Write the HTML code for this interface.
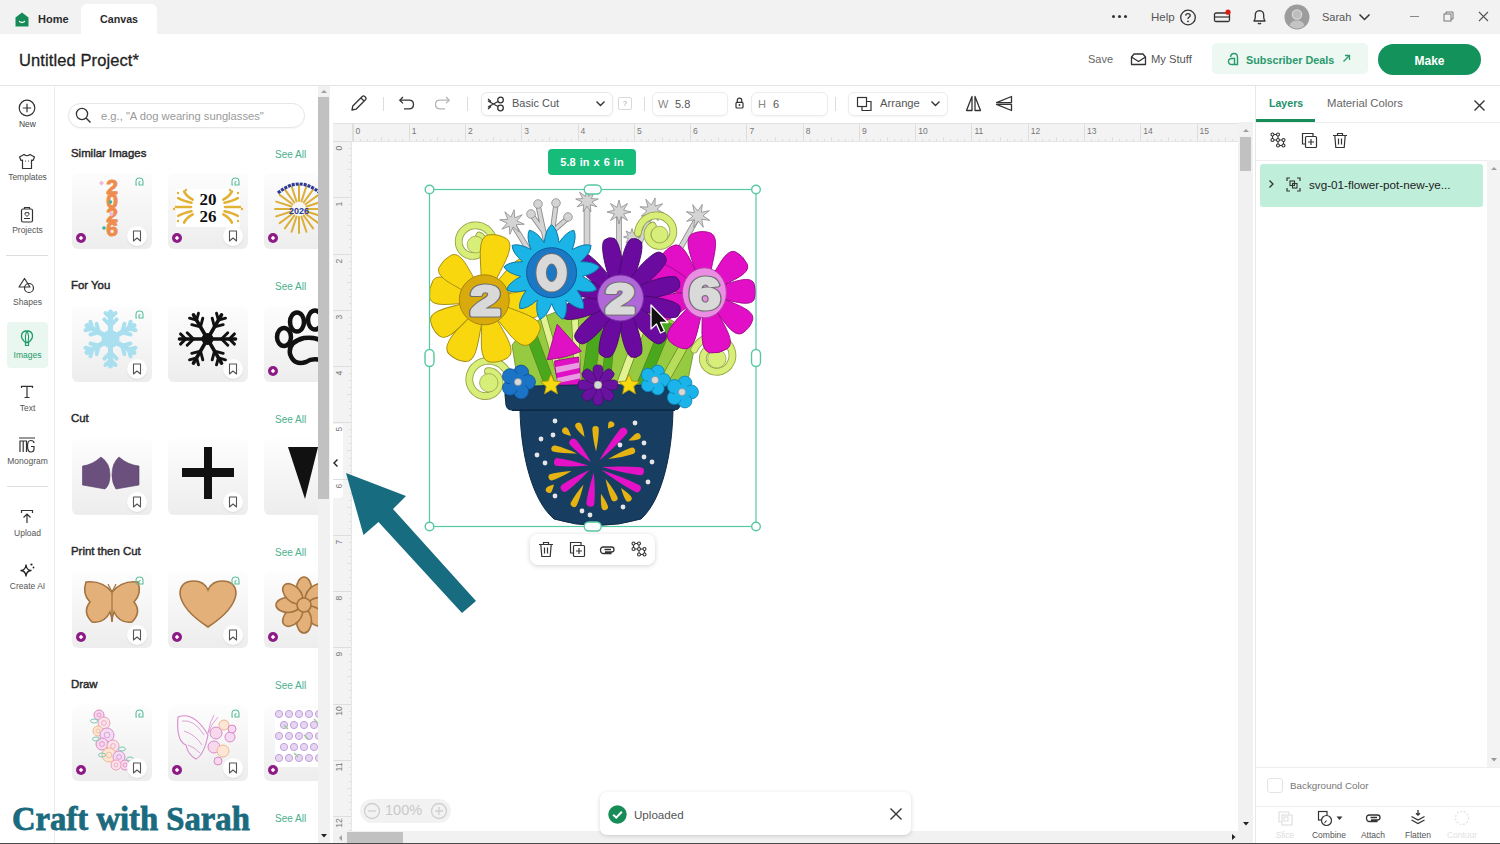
<!DOCTYPE html>
<html><head><meta charset="utf-8">
<style>
*{box-sizing:border-box;margin:0;padding:0}
html,body{width:1500px;height:844px;overflow:hidden;background:#fff;font-family:"Liberation Sans",sans-serif;color:#222;position:relative}
.a{position:absolute}
.t{position:absolute;white-space:nowrap;line-height:1}
#topbar{left:0;top:0;width:1500px;height:34px;background:#f2f2f2}
#header{left:0;top:34px;width:1500px;height:52px;background:#fff;border-bottom:1px solid #e4e4e4}
#nav{left:0;top:86px;width:55px;height:757px;background:#fff;border-right:1px solid #ececec}
#panel{left:55px;top:86px;width:263px;height:757px;background:#fff;overflow:hidden}
#pscroll{left:318px;top:86px;width:12px;height:757px;background:#f1f1f1}
#canvas{left:330px;top:86px;width:925px;height:757px;background:#fff}
#rpanel{left:1255px;top:86px;width:245px;height:757px;background:#fff;border-left:1px solid #e8e8e8}
#bottomline{left:0;top:843px;width:1500px;height:1px;background:#4a4a4a}
.navlbl{position:absolute;width:55px;text-align:center;font-size:9px;color:#555;left:0}
.sec{position:absolute;left:71px;font-size:11.4px;font-weight:normal;-webkit-text-stroke:0.45px #2a2a2a;color:#2a2a2a}
.see{position:absolute;left:275px;font-size:10px;color:#4bb18c}
.card{position:absolute;width:81px;height:76px;border-radius:6px;background:linear-gradient(#fdfdfd,#ededed);overflow:hidden}
.bm{position:absolute;width:20px;height:20px;border-radius:50%;background:#fff;box-shadow:0 1px 2px rgba(0,0,0,.08)}
.pb{position:absolute;width:10px;height:10px;border-radius:50%;background:#8e1a8a}
</style></head>
<body>
<div id="topbar" class="a"></div>
<div id="header" class="a"></div>
<div id="nav" class="a"></div>
<div id="panel" class="a"></div>
<div id="pscroll" class="a"></div>
<div id="canvas" class="a"></div>
<div id="rpanel" class="a"></div>

<!-- TOP BAR -->
<div class="a" style="left:81px;top:4px;width:76px;height:31px;background:#fff;border-radius:6px 6px 0 0"></div>
<svg class="a" style="left:15px;top:12px" width="14" height="15" viewBox="0 0 14 15"><path d="M7 0.5 L13.5 5.5 V14.5 H0.5 V5.5 Z" fill="#178b57"/><path d="M4.5 9.5 Q7 11.5 9.5 9.5" stroke="#fff" stroke-width="1.3" fill="none" stroke-linecap="round"/></svg>
<div class="t" style="left:38px;top:14px;font-size:11px;font-weight:bold;color:#2b2b2b">Home</div>
<div class="t" style="left:100px;top:14px;font-size:10.7px;font-weight:bold;color:#2b2b2b">Canvas</div>
<div class="a" style="left:1112px;top:15px;width:3px;height:3px;border-radius:50%;background:#333;box-shadow:6px 0 0 #333,12px 0 0 #333"></div>
<div class="t" style="left:1151px;top:12px;font-size:11.5px;color:#555">Help</div>
<svg class="a" style="left:1179px;top:9px" width="18" height="17" viewBox="0 0 18 17"><circle cx="9" cy="8.5" r="7.3" fill="none" stroke="#333" stroke-width="1.3"/><path d="M6.7 6.6 Q6.8 4.6 9 4.6 Q11.2 4.6 11.2 6.5 Q11.2 7.8 9.6 8.5 Q9 8.9 9 10" stroke="#333" stroke-width="1.3" fill="none"/><circle cx="9" cy="12.3" r="0.9" fill="#333"/></svg>
<svg class="a" style="left:1213px;top:9px" width="20" height="15" viewBox="0 0 20 15"><rect x="1.5" y="4" width="15" height="8.5" rx="1.5" fill="none" stroke="#333" stroke-width="1.3"/><path d="M1.5 8 H16.5" stroke="#333" stroke-width="1.2"/><circle cx="15" cy="3.2" r="2.6" fill="#d91e18"/></svg>
<svg class="a" style="left:1251px;top:8px" width="17" height="18" viewBox="0 0 17 18"><path d="M3 13 Q4.3 11.5 4.3 9 V7 Q4.3 3 8.5 2.6 Q12.7 3 12.7 7 V9 Q12.7 11.5 14 13 Z" fill="none" stroke="#333" stroke-width="1.3" stroke-linejoin="round"/><path d="M7 15 Q8.5 16.6 10 15" stroke="#333" stroke-width="1.3" fill="none"/></svg>
<svg class="a" style="left:1284px;top:4px" width="26" height="26" viewBox="0 0 26 26"><circle cx="13" cy="13" r="12.5" fill="#9c9c9c"/><circle cx="13" cy="10.5" r="4.6" fill="#bdbdbd" stroke="#d8d8d8" stroke-width="1.3"/><path d="M5.5 21.5 Q7 16.5 13 16.5 Q19 16.5 20.5 21.5 Q17 24.5 13 24.5 Q9 24.5 5.5 21.5Z" fill="#c4c4c4"/></svg>
<div class="t" style="left:1322px;top:12px;font-size:11px;color:#555">Sarah</div>
<svg class="a" style="left:1358px;top:13px" width="13" height="8" viewBox="0 0 13 8"><path d="M1.5 1.5 L6.5 6.5 L11.5 1.5" stroke="#333" stroke-width="1.5" fill="none"/></svg>
<div class="a" style="left:1410px;top:16px;width:9px;height:1px;background:#888"></div>
<svg class="a" style="left:1443px;top:11px" width="11" height="11" viewBox="0 0 11 11"><rect x="1" y="3" width="7" height="7" fill="none" stroke="#777" stroke-width="1"/><path d="M3 3 V1 H10 V8 H8" fill="none" stroke="#777" stroke-width="1"/></svg>
<svg class="a" style="left:1478px;top:11px" width="11" height="11" viewBox="0 0 11 11"><path d="M1 1 L10 10 M10 1 L1 10" stroke="#555" stroke-width="1.1"/></svg>
<!-- HEADER -->
<div class="t" style="left:19px;top:52px;font-size:16.5px;color:#1f1f1f;letter-spacing:0.1px;-webkit-text-stroke:0.3px #1f1f1f">Untitled Project*</div>
<div class="t" style="left:1088px;top:54px;font-size:11px;color:#666">Save</div>
<svg class="a" style="left:1130px;top:52px" width="17" height="14" viewBox="0 0 17 14"><path d="M1.5 5 V12.5 H15.5 V5 L13 2 H4 Z" fill="none" stroke="#333" stroke-width="1.3" stroke-linejoin="round"/><path d="M1.5 5 L8.5 9.5 L15.5 5" fill="none" stroke="#333" stroke-width="1.3"/></svg>
<div class="t" style="left:1151px;top:54px;font-size:11.2px;color:#555">My Stuff</div>
<div class="a" style="left:1212px;top:43px;width:156px;height:31px;border-radius:5px;background:#edf8f2"></div>
<svg class="a" style="left:1227px;top:52px" width="13" height="14" viewBox="0 0 13 14"><path d="M3.5 5 Q4 1.5 7 1.5 Q10.5 1.5 10.5 5.5 V12.5 H5 Q1.5 12.5 1.5 9.5 Q1.5 6.5 5 6.5 H7.5 V12" fill="none" stroke="#2a9a6c" stroke-width="1.4"/></svg>
<div class="t" style="left:1246px;top:55px;font-size:10.8px;font-weight:bold;color:#2a9a6c">Subscriber Deals</div>
<svg class="a" style="left:1342px;top:54px" width="9" height="9" viewBox="0 0 9 9"><path d="M1.5 7.5 L7.5 1.5 M3 1.5 H7.5 V6" stroke="#2a9a6c" stroke-width="1.3" fill="none"/></svg>
<div class="a" style="left:1378px;top:44px;width:103px;height:31px;border-radius:16px;background:#13925b"></div>
<div class="t" style="left:1378px;top:55px;width:103px;text-align:center;font-size:12px;font-weight:bold;color:#fff">Make</div>

<!-- LEFT NAV -->
<svg class="a" style="left:18px;top:99px" width="18" height="18" viewBox="0 0 18 18"><circle cx="9" cy="9" r="7.8" fill="none" stroke="#333" stroke-width="1.2"/><path d="M9 4.8 V13.2 M4.8 9 H13.2" stroke="#333" stroke-width="1.2"/></svg>
<div class="navlbl t" style="top:120px;font-size:8.5px;color:#444">New</div>
<svg class="a" style="left:18px;top:153px" width="18" height="17" viewBox="0 0 18 17"><path d="M6 1.5 L1.5 4 L3 7.5 L4.5 7 V15.5 H13.5 V7 L15 7.5 L16.5 4 L12 1.5 Q9 4 6 1.5 Z" fill="none" stroke="#333" stroke-width="1.2" stroke-linejoin="round"/><circle cx="7.5" cy="8" r="0.6" fill="#333"/><circle cx="10.5" cy="8" r="0.6" fill="#333"/></svg>
<div class="navlbl t" style="top:173px;font-size:8.5px;color:#555">Templates</div>
<svg class="a" style="left:20px;top:206px" width="14" height="17" viewBox="0 0 14 17"><rect x="1.5" y="3" width="11" height="13" rx="1.5" fill="none" stroke="#333" stroke-width="1.2"/><path d="M4.5 3 V1.5 H9.5 V3" fill="none" stroke="#333" stroke-width="1.2"/><path d="M4 12.5 H10 M7 10.5 Q4.3 8.5 5 7 Q6 5.8 7 7 Q8 5.8 9 7 Q9.7 8.5 7 10.5Z" fill="none" stroke="#333" stroke-width="1"/></svg>
<div class="navlbl t" style="top:226px;font-size:8.5px;color:#555">Projects</div>
<div class="a" style="left:6px;top:255px;width:42px;height:1px;background:#ddd"></div>
<svg class="a" style="left:18px;top:277px" width="18" height="17" viewBox="0 0 18 17"><path d="M6.5 1.5 L1 10 H12 Z" fill="none" stroke="#333" stroke-width="1.2" stroke-linejoin="round"/><circle cx="11" cy="11" r="4.5" fill="none" stroke="#333" stroke-width="1.2"/></svg>
<div class="navlbl t" style="top:298px;font-size:8.5px;color:#555">Shapes</div>
<div class="a" style="left:7px;top:322px;width:41px;height:46px;border-radius:4px;background:#eaf7f0"></div>
<svg class="a" style="left:20px;top:330px" width="14" height="17" viewBox="0 0 14 17"><path d="M7 1 Q12.5 1 12.5 6 Q12.5 9 8.5 12.5 H5.5 Q1.5 9 1.5 6 Q1.5 1 7 1 Z" fill="none" stroke="#1f9a6a" stroke-width="1.3"/><path d="M7 1 Q4.5 5 6 12.5 M7 1 Q9.5 5 8 12.5" fill="none" stroke="#1f9a6a" stroke-width="1.1"/><path d="M5.5 13 V15.5 H8.5 V13" fill="none" stroke="#1f9a6a" stroke-width="1.2"/></svg>
<div class="navlbl t" style="top:351px;font-size:8.5px;color:#1f9a6a">Images</div>
<svg class="a" style="left:20px;top:385px" width="14" height="14" viewBox="0 0 14 14"><path d="M1.5 3 V1.3 H12.5 V3 M7 1.3 V12.5 M4.5 12.5 H9.5" fill="none" stroke="#333" stroke-width="1.2"/></svg>
<div class="navlbl t" style="top:404px;font-size:8.5px;color:#555">Text</div>
<svg class="a" style="left:18px;top:437px" width="18" height="16" viewBox="0 0 18 16"><path d="M1 1 H17" stroke="#333" stroke-width="1"/><path d="M2 15 V4 H8.5 V15 M5.2 4 V15" fill="none" stroke="#333" stroke-width="1.2"/><path d="M16 6 Q16 3.5 12.7 3.5 Q9.5 3.5 9.5 9 Q9.5 15 12.7 15 Q16 15 16 12 V9.5 H13" fill="none" stroke="#333" stroke-width="1.2"/></svg>
<div class="navlbl t" style="top:457px;font-size:8.5px;color:#555">Monogram</div>
<div class="a" style="left:7px;top:486px;width:41px;height:1px;background:#ddd"></div>
<svg class="a" style="left:20px;top:509px" width="14" height="15" viewBox="0 0 14 15"><path d="M1.5 4 V1.5 H12.5 V4" fill="none" stroke="#333" stroke-width="1.2"/><path d="M7 14 V5 M3.5 8.5 L7 5 L10.5 8.5" fill="none" stroke="#333" stroke-width="1.2"/></svg>
<div class="navlbl t" style="top:529px;font-size:8.5px;color:#555">Upload</div>
<svg class="a" style="left:19px;top:562px" width="17" height="16" viewBox="0 0 17 16"><path d="M7 3 Q7.5 8 12 8.5 Q7.5 9 7 14 Q6.5 9 2 8.5 Q6.5 8 7 3 Z" fill="none" stroke="#222" stroke-width="1.3" stroke-linejoin="round"/><circle cx="12.5" cy="2.5" r="1.1" fill="#222"/><circle cx="14.5" cy="5.5" r="0.9" fill="#222"/></svg>
<div class="navlbl t" style="top:582px;font-size:8.5px;color:#555">Create AI</div>

<!-- LEFT PANEL -->
<div class="a" style="left:68px;top:103px;width:237px;height:25px;border-radius:13px;border:1px solid #e6e6e6;background:#fff;box-shadow:0 1px 2px rgba(0,0,0,.04)"></div>
<svg class="a" style="left:75px;top:107px" width="17" height="17" viewBox="0 0 17 17"><circle cx="7" cy="7" r="5.6" fill="none" stroke="#333" stroke-width="1.3"/><path d="M11 11 L15.5 15.5" stroke="#333" stroke-width="1.4"/></svg>
<div class="t" style="left:101px;top:111px;font-size:11.2px;color:#9a9a9a">e.g., "A dog wearing sunglasses"</div>

<div class="t sec" style="top:148px">Similar Images</div>
<div class="t see" style="top:150px">See All</div>
<div class="t sec" style="top:280px">For You</div>
<div class="t see" style="top:282px">See All</div>
<div class="t sec" style="top:413px">Cut</div>
<div class="t see" style="top:415px">See All</div>
<div class="t sec" style="top:546px">Print then Cut</div>
<div class="t see" style="top:548px">See All</div>
<div class="t sec" style="top:679px">Draw</div>
<div class="t see" style="top:681px">See All</div>
<div class="t see" style="top:814px">See All</div>
<div class="card" style="left:72px;top:173px;width:80px;border-radius:6px"></div>
<!--THUMB00--><svg class="a" style="left:72px;top:173px" width="80" height="76" viewBox="0 0 80 76"><text x="40" y="21" text-anchor="middle" font-family="Liberation Sans" font-weight="bold" font-size="21" fill="#ee8c4e" stroke="#ee8c4e" stroke-width="1">2</text><text x="40" y="35" text-anchor="middle" font-family="Liberation Sans" font-weight="bold" font-size="21" fill="#ee8c4e" stroke="#ee8c4e" stroke-width="1">0</text><text x="40" y="49" text-anchor="middle" font-family="Liberation Sans" font-weight="bold" font-size="21" fill="#ee8c4e" stroke="#ee8c4e" stroke-width="1">2</text><text x="40" y="63" text-anchor="middle" font-family="Liberation Sans" font-weight="bold" font-size="21" fill="#ee8c4e" stroke="#ee8c4e" stroke-width="1">6</text><path d="M27 10 l2.5 -2.5 l2.5 2.5 l-2.5 2.5z M37 41 l2.5 -2.5 l2.5 2.5 l-2.5 2.5z" fill="#f0b8d8"/><circle cx="38.5" cy="29" r="1.8" fill="#3bb3a4"/><circle cx="32" cy="55" r="1.8" fill="#3bb3a4"/></svg>
<div class="bm" style="left:127px;top:226px"></div><svg class="a" style="left:132px;top:230px" width="10" height="12" viewBox="0 0 10 12"><path d="M1.5 1 H8.5 V11 L5 8 L1.5 11 Z" fill="none" stroke="#555" stroke-width="1.1" stroke-linejoin="round"/></svg>
<svg class="a" style="left:76px;top:233px" width="10" height="10" viewBox="0 0 10 10"><circle cx="5" cy="5" r="5" fill="#8d1b86"/><rect x="3.4" y="3.4" width="3.2" height="3.2" transform="rotate(45 5 5)" fill="#fff"/></svg>
<svg class="a" style="left:135px;top:177px" width="9" height="9" viewBox="0 0 9 9"><path d="M2 8 H1 V4.5 Q1 1 4.5 1 Q8 1 8 4.5 V8 H4 V5.5 Q4 4.5 5.5 4.5" fill="none" stroke="#5cc09a" stroke-width="1.1"/></svg>
<div class="card" style="left:168px;top:173px;width:80px;border-radius:6px"></div>
<!--THUMB01--><svg class="a" style="left:168px;top:173px" width="80" height="76" viewBox="0 0 80 76"><rect x="8" y="16" width="64" height="38" fill="#fff"/><path d="M24.7,26.6 Q18.4,23.3 16.1,18.4" fill="none" stroke="#e2b236" stroke-width="2.6" stroke-linecap="round"/><path d="M23.5,29.8 Q14.8,27.8 10.2,25.1" fill="none" stroke="#e2b236" stroke-width="2.6" stroke-linecap="round"/><path d="M23.0,34.0 Q13.5,34.0 8.0,34.0" fill="none" stroke="#e2b236" stroke-width="2.6" stroke-linecap="round"/><path d="M23.5,38.2 Q14.8,40.2 10.2,42.9" fill="none" stroke="#e2b236" stroke-width="2.6" stroke-linecap="round"/><path d="M24.7,41.4 Q18.4,44.7 16.1,49.6" fill="none" stroke="#e2b236" stroke-width="2.6" stroke-linecap="round"/><circle cx="10" cy="20" r="1.2" fill="#e2b236"/><circle cx="6" cy="36" r="1.2" fill="#e2b236"/><circle cx="10" cy="48" r="1.2" fill="#e2b236"/><circle cx="18" cy="17" r="1.2" fill="#e2b236"/><path d="M55.3,26.6 Q61.6,23.3 63.9,18.4" fill="none" stroke="#e2b236" stroke-width="2.6" stroke-linecap="round"/><path d="M56.5,29.8 Q65.2,27.8 69.8,25.1" fill="none" stroke="#e2b236" stroke-width="2.6" stroke-linecap="round"/><path d="M57.0,34.0 Q66.5,34.0 72.0,34.0" fill="none" stroke="#e2b236" stroke-width="2.6" stroke-linecap="round"/><path d="M56.5,38.2 Q65.2,40.2 69.8,42.9" fill="none" stroke="#e2b236" stroke-width="2.6" stroke-linecap="round"/><path d="M55.3,41.4 Q61.6,44.7 63.9,49.6" fill="none" stroke="#e2b236" stroke-width="2.6" stroke-linecap="round"/><circle cx="70" cy="20" r="1.2" fill="#e2b236"/><circle cx="74" cy="36" r="1.2" fill="#e2b236"/><circle cx="70" cy="48" r="1.2" fill="#e2b236"/><circle cx="62" cy="17" r="1.2" fill="#e2b236"/><text x="40" y="32" text-anchor="middle" font-family="Liberation Serif" font-weight="bold" font-size="17" fill="#111">20</text><text x="40" y="48.5" text-anchor="middle" font-family="Liberation Serif" font-weight="bold" font-size="17" fill="#111">26</text></svg>
<div class="bm" style="left:223px;top:226px"></div><svg class="a" style="left:228px;top:230px" width="10" height="12" viewBox="0 0 10 12"><path d="M1.5 1 H8.5 V11 L5 8 L1.5 11 Z" fill="none" stroke="#555" stroke-width="1.1" stroke-linejoin="round"/></svg>
<svg class="a" style="left:172px;top:233px" width="10" height="10" viewBox="0 0 10 10"><circle cx="5" cy="5" r="5" fill="#8d1b86"/><rect x="3.4" y="3.4" width="3.2" height="3.2" transform="rotate(45 5 5)" fill="#fff"/></svg>
<svg class="a" style="left:231px;top:177px" width="9" height="9" viewBox="0 0 9 9"><path d="M2 8 H1 V4.5 Q1 1 4.5 1 Q8 1 8 4.5 V8 H4 V5.5 Q4 4.5 5.5 4.5" fill="none" stroke="#5cc09a" stroke-width="1.1"/></svg>
<div class="card" style="left:264px;top:173px;width:54px;border-radius:6px 0 0 6px"></div>
<!--THUMB02--><svg class="a" style="left:264px;top:173px" width="54" height="76" viewBox="0 0 54 76"><line x1="43.0" y1="36.0" x2="59.0" y2="36.0" stroke="#dcae3a" stroke-width="2" stroke-linecap="round"/><line x1="42.6" y1="38.5" x2="57.8" y2="43.4" stroke="#dcae3a" stroke-width="2" stroke-linecap="round"/><line x1="41.5" y1="40.7" x2="54.4" y2="50.1" stroke="#dcae3a" stroke-width="2" stroke-linecap="round"/><line x1="39.7" y1="42.5" x2="49.1" y2="55.4" stroke="#dcae3a" stroke-width="2" stroke-linecap="round"/><line x1="37.5" y1="43.6" x2="42.4" y2="58.8" stroke="#dcae3a" stroke-width="2" stroke-linecap="round"/><line x1="35.0" y1="44.0" x2="35.0" y2="60.0" stroke="#dcae3a" stroke-width="2" stroke-linecap="round"/><line x1="32.5" y1="43.6" x2="27.6" y2="58.8" stroke="#dcae3a" stroke-width="2" stroke-linecap="round"/><line x1="30.3" y1="42.5" x2="20.9" y2="55.4" stroke="#dcae3a" stroke-width="2" stroke-linecap="round"/><line x1="28.5" y1="40.7" x2="15.6" y2="50.1" stroke="#dcae3a" stroke-width="2" stroke-linecap="round"/><line x1="27.4" y1="38.5" x2="12.2" y2="43.4" stroke="#dcae3a" stroke-width="2" stroke-linecap="round"/><line x1="27.0" y1="36.0" x2="11.0" y2="36.0" stroke="#dcae3a" stroke-width="2" stroke-linecap="round"/><line x1="27.4" y1="33.5" x2="12.2" y2="28.6" stroke="#dcae3a" stroke-width="2" stroke-linecap="round"/><line x1="28.5" y1="31.3" x2="15.6" y2="21.9" stroke="#dcae3a" stroke-width="2" stroke-linecap="round"/><line x1="30.3" y1="29.5" x2="20.9" y2="16.6" stroke="#dcae3a" stroke-width="2" stroke-linecap="round"/><line x1="32.5" y1="28.4" x2="27.6" y2="13.2" stroke="#dcae3a" stroke-width="2" stroke-linecap="round"/><line x1="35.0" y1="28.0" x2="35.0" y2="12.0" stroke="#dcae3a" stroke-width="2" stroke-linecap="round"/><line x1="37.5" y1="28.4" x2="42.4" y2="13.2" stroke="#dcae3a" stroke-width="2" stroke-linecap="round"/><line x1="39.7" y1="29.5" x2="49.1" y2="16.6" stroke="#dcae3a" stroke-width="2" stroke-linecap="round"/><line x1="41.5" y1="31.3" x2="54.4" y2="21.9" stroke="#dcae3a" stroke-width="2" stroke-linecap="round"/><line x1="42.6" y1="33.5" x2="57.8" y2="28.6" stroke="#dcae3a" stroke-width="2" stroke-linecap="round"/><path d="M14 20 Q35 2 56 20" fill="none" stroke="#2a3a96" stroke-width="3.2" stroke-dasharray="3 1"/><text x="35" y="41" text-anchor="middle" font-family="Liberation Sans" font-weight="bold" font-size="9" fill="#2a3a96">2026</text></svg>
<svg class="a" style="left:268px;top:233px" width="10" height="10" viewBox="0 0 10 10"><circle cx="5" cy="5" r="5" fill="#8d1b86"/><rect x="3.4" y="3.4" width="3.2" height="3.2" transform="rotate(45 5 5)" fill="#fff"/></svg>
<div class="card" style="left:72px;top:306px;width:80px;border-radius:6px"></div>
<!--THUMB10--><svg class="a" style="left:72px;top:306px" width="80" height="76" viewBox="0 0 80 76"><line x1="38.5" y1="33" x2="38.5" y2="6.0" stroke="#a9dfee" stroke-width="5" stroke-linecap="round"/><line x1="38.5" y1="19.5" x2="32.4" y2="13.4" stroke="#a9dfee" stroke-width="4.0" stroke-linecap="round"/><line x1="38.5" y1="19.5" x2="44.6" y2="13.4" stroke="#a9dfee" stroke-width="4.0" stroke-linecap="round"/><line x1="38.5" y1="11.9" x2="33.5" y2="7.0" stroke="#a9dfee" stroke-width="4.0" stroke-linecap="round"/><line x1="38.5" y1="11.9" x2="43.5" y2="7.0" stroke="#a9dfee" stroke-width="4.0" stroke-linecap="round"/><line x1="38.5" y1="33" x2="61.9" y2="19.5" stroke="#a9dfee" stroke-width="5" stroke-linecap="round"/><line x1="50.2" y1="26.2" x2="52.4" y2="17.9" stroke="#a9dfee" stroke-width="4.0" stroke-linecap="round"/><line x1="50.2" y1="26.2" x2="58.5" y2="28.5" stroke="#a9dfee" stroke-width="4.0" stroke-linecap="round"/><line x1="56.7" y1="22.5" x2="58.6" y2="15.7" stroke="#a9dfee" stroke-width="4.0" stroke-linecap="round"/><line x1="56.7" y1="22.5" x2="63.5" y2="24.3" stroke="#a9dfee" stroke-width="4.0" stroke-linecap="round"/><line x1="38.5" y1="33" x2="61.9" y2="46.5" stroke="#a9dfee" stroke-width="5" stroke-linecap="round"/><line x1="50.2" y1="39.8" x2="58.5" y2="37.5" stroke="#a9dfee" stroke-width="4.0" stroke-linecap="round"/><line x1="50.2" y1="39.8" x2="52.4" y2="48.1" stroke="#a9dfee" stroke-width="4.0" stroke-linecap="round"/><line x1="56.7" y1="43.5" x2="63.5" y2="41.7" stroke="#a9dfee" stroke-width="4.0" stroke-linecap="round"/><line x1="56.7" y1="43.5" x2="58.6" y2="50.3" stroke="#a9dfee" stroke-width="4.0" stroke-linecap="round"/><line x1="38.5" y1="33" x2="38.5" y2="60.0" stroke="#a9dfee" stroke-width="5" stroke-linecap="round"/><line x1="38.5" y1="46.5" x2="44.6" y2="52.6" stroke="#a9dfee" stroke-width="4.0" stroke-linecap="round"/><line x1="38.5" y1="46.5" x2="32.4" y2="52.6" stroke="#a9dfee" stroke-width="4.0" stroke-linecap="round"/><line x1="38.5" y1="54.1" x2="43.5" y2="59.0" stroke="#a9dfee" stroke-width="4.0" stroke-linecap="round"/><line x1="38.5" y1="54.1" x2="33.5" y2="59.0" stroke="#a9dfee" stroke-width="4.0" stroke-linecap="round"/><line x1="38.5" y1="33" x2="15.1" y2="46.5" stroke="#a9dfee" stroke-width="5" stroke-linecap="round"/><line x1="26.8" y1="39.8" x2="24.6" y2="48.1" stroke="#a9dfee" stroke-width="4.0" stroke-linecap="round"/><line x1="26.8" y1="39.8" x2="18.5" y2="37.5" stroke="#a9dfee" stroke-width="4.0" stroke-linecap="round"/><line x1="20.3" y1="43.5" x2="18.4" y2="50.3" stroke="#a9dfee" stroke-width="4.0" stroke-linecap="round"/><line x1="20.3" y1="43.5" x2="13.5" y2="41.7" stroke="#a9dfee" stroke-width="4.0" stroke-linecap="round"/><line x1="38.5" y1="33" x2="15.1" y2="19.5" stroke="#a9dfee" stroke-width="5" stroke-linecap="round"/><line x1="26.8" y1="26.2" x2="18.5" y2="28.5" stroke="#a9dfee" stroke-width="4.0" stroke-linecap="round"/><line x1="26.8" y1="26.2" x2="24.6" y2="17.9" stroke="#a9dfee" stroke-width="4.0" stroke-linecap="round"/><line x1="20.3" y1="22.5" x2="13.5" y2="24.3" stroke="#a9dfee" stroke-width="4.0" stroke-linecap="round"/><line x1="20.3" y1="22.5" x2="18.4" y2="15.7" stroke="#a9dfee" stroke-width="4.0" stroke-linecap="round"/><circle cx="38.5" cy="33" r="9" fill="#a9dfee"/></svg>
<div class="bm" style="left:127px;top:359px"></div><svg class="a" style="left:132px;top:363px" width="10" height="12" viewBox="0 0 10 12"><path d="M1.5 1 H8.5 V11 L5 8 L1.5 11 Z" fill="none" stroke="#555" stroke-width="1.1" stroke-linejoin="round"/></svg>
<svg class="a" style="left:135px;top:310px" width="9" height="9" viewBox="0 0 9 9"><path d="M2 8 H1 V4.5 Q1 1 4.5 1 Q8 1 8 4.5 V8 H4 V5.5 Q4 4.5 5.5 4.5" fill="none" stroke="#5cc09a" stroke-width="1.1"/></svg>
<div class="card" style="left:168px;top:306px;width:80px;border-radius:6px"></div>
<!--THUMB11--><svg class="a" style="left:168px;top:306px" width="80" height="76" viewBox="0 0 80 76"><line x1="39.5" y1="33" x2="67.5" y2="33.0" stroke="#111" stroke-width="3.6" stroke-linecap="round"/><line x1="53.5" y1="33.0" x2="59.8" y2="26.7" stroke="#111" stroke-width="2.8800000000000003" stroke-linecap="round"/><line x1="53.5" y1="33.0" x2="59.8" y2="39.3" stroke="#111" stroke-width="2.8800000000000003" stroke-linecap="round"/><line x1="61.3" y1="33.0" x2="66.5" y2="27.9" stroke="#111" stroke-width="2.8800000000000003" stroke-linecap="round"/><line x1="61.3" y1="33.0" x2="66.5" y2="38.1" stroke="#111" stroke-width="2.8800000000000003" stroke-linecap="round"/><line x1="39.5" y1="33" x2="53.5" y2="57.2" stroke="#111" stroke-width="3.6" stroke-linecap="round"/><line x1="46.5" y1="45.1" x2="55.2" y2="47.4" stroke="#111" stroke-width="2.8800000000000003" stroke-linecap="round"/><line x1="46.5" y1="45.1" x2="44.2" y2="53.8" stroke="#111" stroke-width="2.8800000000000003" stroke-linecap="round"/><line x1="50.4" y1="51.9" x2="57.5" y2="53.8" stroke="#111" stroke-width="2.8800000000000003" stroke-linecap="round"/><line x1="50.4" y1="51.9" x2="48.5" y2="58.9" stroke="#111" stroke-width="2.8800000000000003" stroke-linecap="round"/><line x1="39.5" y1="33" x2="25.5" y2="57.2" stroke="#111" stroke-width="3.6" stroke-linecap="round"/><line x1="32.5" y1="45.1" x2="34.8" y2="53.8" stroke="#111" stroke-width="2.8800000000000003" stroke-linecap="round"/><line x1="32.5" y1="45.1" x2="23.8" y2="47.4" stroke="#111" stroke-width="2.8800000000000003" stroke-linecap="round"/><line x1="28.6" y1="51.9" x2="30.5" y2="58.9" stroke="#111" stroke-width="2.8800000000000003" stroke-linecap="round"/><line x1="28.6" y1="51.9" x2="21.5" y2="53.8" stroke="#111" stroke-width="2.8800000000000003" stroke-linecap="round"/><line x1="39.5" y1="33" x2="11.5" y2="33.0" stroke="#111" stroke-width="3.6" stroke-linecap="round"/><line x1="25.5" y1="33.0" x2="19.2" y2="39.3" stroke="#111" stroke-width="2.8800000000000003" stroke-linecap="round"/><line x1="25.5" y1="33.0" x2="19.2" y2="26.7" stroke="#111" stroke-width="2.8800000000000003" stroke-linecap="round"/><line x1="17.7" y1="33.0" x2="12.5" y2="38.1" stroke="#111" stroke-width="2.8800000000000003" stroke-linecap="round"/><line x1="17.7" y1="33.0" x2="12.5" y2="27.9" stroke="#111" stroke-width="2.8800000000000003" stroke-linecap="round"/><line x1="39.5" y1="33" x2="25.5" y2="8.8" stroke="#111" stroke-width="3.6" stroke-linecap="round"/><line x1="32.5" y1="20.9" x2="23.8" y2="18.6" stroke="#111" stroke-width="2.8800000000000003" stroke-linecap="round"/><line x1="32.5" y1="20.9" x2="34.8" y2="12.2" stroke="#111" stroke-width="2.8800000000000003" stroke-linecap="round"/><line x1="28.6" y1="14.1" x2="21.5" y2="12.2" stroke="#111" stroke-width="2.8800000000000003" stroke-linecap="round"/><line x1="28.6" y1="14.1" x2="30.5" y2="7.1" stroke="#111" stroke-width="2.8800000000000003" stroke-linecap="round"/><line x1="39.5" y1="33" x2="53.5" y2="8.8" stroke="#111" stroke-width="3.6" stroke-linecap="round"/><line x1="46.5" y1="20.9" x2="44.2" y2="12.2" stroke="#111" stroke-width="2.8800000000000003" stroke-linecap="round"/><line x1="46.5" y1="20.9" x2="55.2" y2="18.6" stroke="#111" stroke-width="2.8800000000000003" stroke-linecap="round"/><line x1="50.4" y1="14.1" x2="48.5" y2="7.1" stroke="#111" stroke-width="2.8800000000000003" stroke-linecap="round"/><line x1="50.4" y1="14.1" x2="57.5" y2="12.2" stroke="#111" stroke-width="2.8800000000000003" stroke-linecap="round"/><circle cx="39.5" cy="33" r="6" fill="#111"/></svg>
<div class="bm" style="left:223px;top:359px"></div><svg class="a" style="left:228px;top:363px" width="10" height="12" viewBox="0 0 10 12"><path d="M1.5 1 H8.5 V11 L5 8 L1.5 11 Z" fill="none" stroke="#555" stroke-width="1.1" stroke-linejoin="round"/></svg>
<div class="card" style="left:264px;top:306px;width:54px;border-radius:6px 0 0 6px"></div>
<!--THUMB12--><svg class="a" style="left:264px;top:306px" width="54" height="76" viewBox="0 0 54 76"><g fill="none" stroke="#111" stroke-width="4.5"><path d="M26 48 Q24 36 40 32 Q56 30 62 40 Q68 52 56 54 Q48 52 42 56 Q30 60 26 48 Z"/><ellipse cx="20" cy="31" rx="7" ry="9"/><ellipse cx="33" cy="16" rx="7" ry="9.5"/><ellipse cx="51" cy="14" rx="7" ry="9.5"/></g></svg>
<svg class="a" style="left:268px;top:366px" width="10" height="10" viewBox="0 0 10 10"><circle cx="5" cy="5" r="5" fill="#8d1b86"/><rect x="3.4" y="3.4" width="3.2" height="3.2" transform="rotate(45 5 5)" fill="#fff"/></svg>
<div class="card" style="left:72px;top:439px;width:80px;border-radius:6px"></div>
<!--THUMB20--><svg class="a" style="left:72px;top:439px" width="80" height="76" viewBox="0 0 80 76"><path d="M10.5 27 Q20 26 29 18 Q38 24 38 36 Q38 46 33 50 L10.5 46 Z" fill="#6b4f7c" stroke="#5a3f6a" stroke-width="0.6"/><path d="M44 50 Q40 44 40 36 Q40 24 47 18 Q56 26 67 27 L67 46 Z" fill="#6b4f7c" stroke="#5a3f6a" stroke-width="0.6"/></svg>
<div class="bm" style="left:127px;top:492px"></div><svg class="a" style="left:132px;top:496px" width="10" height="12" viewBox="0 0 10 12"><path d="M1.5 1 H8.5 V11 L5 8 L1.5 11 Z" fill="none" stroke="#555" stroke-width="1.1" stroke-linejoin="round"/></svg>
<div class="card" style="left:168px;top:439px;width:80px;border-radius:6px"></div>
<!--THUMB21--><svg class="a" style="left:168px;top:439px" width="80" height="76" viewBox="0 0 80 76"><rect x="36" y="8" width="8" height="52" fill="#111"/><rect x="14" y="29" width="52" height="9" fill="#111"/></svg>
<div class="bm" style="left:223px;top:492px"></div><svg class="a" style="left:228px;top:496px" width="10" height="12" viewBox="0 0 10 12"><path d="M1.5 1 H8.5 V11 L5 8 L1.5 11 Z" fill="none" stroke="#555" stroke-width="1.1" stroke-linejoin="round"/></svg>
<div class="card" style="left:264px;top:439px;width:54px;border-radius:6px 0 0 6px"></div>
<!--THUMB22--><svg class="a" style="left:264px;top:439px" width="54" height="76" viewBox="0 0 54 76"><polygon points="24,8 54,8 41,60" fill="#111"/></svg>
<div class="card" style="left:72px;top:572px;width:80px;border-radius:6px"></div>
<!--THUMB30--><svg class="a" style="left:72px;top:572px" width="80" height="76" viewBox="0 0 80 76"><path d="M40 20 Q30 8 14 10 Q10 22 18 30 Q10 40 20 50 Q32 52 38 40 Q40 45 40 50 Q40 45 42 40 Q48 52 60 50 Q70 40 62 30 Q70 22 66 10 Q50 8 40 20 Z" fill="#e3b079" stroke="#a27440" stroke-width="1.6"/><path d="M40 18 V48 M36 12 L40 20 L44 12" stroke="#a27440" stroke-width="1.2" fill="none"/></svg>
<div class="bm" style="left:127px;top:625px"></div><svg class="a" style="left:132px;top:629px" width="10" height="12" viewBox="0 0 10 12"><path d="M1.5 1 H8.5 V11 L5 8 L1.5 11 Z" fill="none" stroke="#555" stroke-width="1.1" stroke-linejoin="round"/></svg>
<svg class="a" style="left:76px;top:632px" width="10" height="10" viewBox="0 0 10 10"><circle cx="5" cy="5" r="5" fill="#8d1b86"/><rect x="3.4" y="3.4" width="3.2" height="3.2" transform="rotate(45 5 5)" fill="#fff"/></svg>
<svg class="a" style="left:135px;top:576px" width="9" height="9" viewBox="0 0 9 9"><path d="M2 8 H1 V4.5 Q1 1 4.5 1 Q8 1 8 4.5 V8 H4 V5.5 Q4 4.5 5.5 4.5" fill="none" stroke="#5cc09a" stroke-width="1.1"/></svg>
<div class="card" style="left:168px;top:572px;width:80px;border-radius:6px"></div>
<!--THUMB31--><svg class="a" style="left:168px;top:572px" width="80" height="76" viewBox="0 0 80 76"><path d="M40 55 Q14 38 12 22 Q12 9 26 9 Q36 9 40 18 Q44 9 54 9 Q68 9 68 22 Q66 38 40 55 Z" fill="#e3b079" stroke="#a27440" stroke-width="1.6"/></svg>
<div class="bm" style="left:223px;top:625px"></div><svg class="a" style="left:228px;top:629px" width="10" height="12" viewBox="0 0 10 12"><path d="M1.5 1 H8.5 V11 L5 8 L1.5 11 Z" fill="none" stroke="#555" stroke-width="1.1" stroke-linejoin="round"/></svg>
<svg class="a" style="left:172px;top:632px" width="10" height="10" viewBox="0 0 10 10"><circle cx="5" cy="5" r="5" fill="#8d1b86"/><rect x="3.4" y="3.4" width="3.2" height="3.2" transform="rotate(45 5 5)" fill="#fff"/></svg>
<svg class="a" style="left:231px;top:576px" width="9" height="9" viewBox="0 0 9 9"><path d="M2 8 H1 V4.5 Q1 1 4.5 1 Q8 1 8 4.5 V8 H4 V5.5 Q4 4.5 5.5 4.5" fill="none" stroke="#5cc09a" stroke-width="1.1"/></svg>
<div class="card" style="left:264px;top:572px;width:54px;border-radius:6px 0 0 6px"></div>
<!--THUMB32--><svg class="a" style="left:264px;top:572px" width="54" height="76" viewBox="0 0 54 76"><ellipse transform="translate(40,33) rotate(0)" cx="0" cy="-16" rx="7.5" ry="12" fill="#e3b079" stroke="#a27440" stroke-width="1.6"/><ellipse transform="translate(40,33) rotate(45)" cx="0" cy="-16" rx="7.5" ry="12" fill="#e3b079" stroke="#a27440" stroke-width="1.6"/><ellipse transform="translate(40,33) rotate(90)" cx="0" cy="-16" rx="7.5" ry="12" fill="#e3b079" stroke="#a27440" stroke-width="1.6"/><ellipse transform="translate(40,33) rotate(135)" cx="0" cy="-16" rx="7.5" ry="12" fill="#e3b079" stroke="#a27440" stroke-width="1.6"/><ellipse transform="translate(40,33) rotate(180)" cx="0" cy="-16" rx="7.5" ry="12" fill="#e3b079" stroke="#a27440" stroke-width="1.6"/><ellipse transform="translate(40,33) rotate(225)" cx="0" cy="-16" rx="7.5" ry="12" fill="#e3b079" stroke="#a27440" stroke-width="1.6"/><ellipse transform="translate(40,33) rotate(270)" cx="0" cy="-16" rx="7.5" ry="12" fill="#e3b079" stroke="#a27440" stroke-width="1.6"/><ellipse transform="translate(40,33) rotate(315)" cx="0" cy="-16" rx="7.5" ry="12" fill="#e3b079" stroke="#a27440" stroke-width="1.6"/><circle cx="40" cy="33" r="7" fill="#e3b079" stroke="#a27440" stroke-width="1.6"/></svg>
<svg class="a" style="left:268px;top:632px" width="10" height="10" viewBox="0 0 10 10"><circle cx="5" cy="5" r="5" fill="#8d1b86"/><rect x="3.4" y="3.4" width="3.2" height="3.2" transform="rotate(45 5 5)" fill="#fff"/></svg>
<div class="card" style="left:72px;top:705px;width:80px;border-radius:6px"></div>
<!--THUMB40--><svg class="a" style="left:72px;top:705px" width="80" height="76" viewBox="0 0 80 76"><circle cx="27" cy="10" r="5" fill="#f7d8ec" stroke="#dd88c8" stroke-width="1"/><circle cx="27" cy="10" r="2.0" fill="none" stroke="#dd88c8" stroke-width="0.8"/><circle cx="32" cy="18" r="6" fill="#fbe3ea" stroke="#e8a0c0" stroke-width="1"/><circle cx="32" cy="18" r="2.4" fill="none" stroke="#e8a0c0" stroke-width="0.8"/><circle cx="26" cy="26" r="5" fill="#fde6d6" stroke="#f0b890" stroke-width="1"/><circle cx="26" cy="26" r="2.0" fill="none" stroke="#f0b890" stroke-width="0.8"/><circle cx="35" cy="30" r="7" fill="#f3dcf2" stroke="#d890d0" stroke-width="1"/><circle cx="35" cy="30" r="2.8" fill="none" stroke="#d890d0" stroke-width="0.8"/><circle cx="30" cy="39" r="6" fill="#f7d8ec" stroke="#dd88c8" stroke-width="1"/><circle cx="30" cy="39" r="2.4" fill="none" stroke="#dd88c8" stroke-width="0.8"/><circle cx="41" cy="41" r="6" fill="#fbe3ea" stroke="#e8a0c0" stroke-width="1"/><circle cx="41" cy="41" r="2.4" fill="none" stroke="#e8a0c0" stroke-width="0.8"/><circle cx="37" cy="50" r="7" fill="#fde6d6" stroke="#f0b890" stroke-width="1"/><circle cx="37" cy="50" r="2.8" fill="none" stroke="#f0b890" stroke-width="0.8"/><circle cx="47" cy="52" r="6" fill="#f3dcf2" stroke="#d890d0" stroke-width="1"/><circle cx="47" cy="52" r="2.4" fill="none" stroke="#d890d0" stroke-width="0.8"/><circle cx="53" cy="60" r="5" fill="#f7d8ec" stroke="#dd88c8" stroke-width="1"/><circle cx="53" cy="60" r="2.0" fill="none" stroke="#dd88c8" stroke-width="0.8"/><circle cx="44" cy="60" r="5" fill="#fbe3ea" stroke="#e8a0c0" stroke-width="1"/><circle cx="44" cy="60" r="2.0" fill="none" stroke="#e8a0c0" stroke-width="0.8"/><ellipse cx="22" cy="16" rx="3.5" ry="2" fill="none" stroke="#7ccab0" stroke-width="1"/><ellipse cx="24" cy="34" rx="3.5" ry="2" fill="none" stroke="#7ccab0" stroke-width="1"/><ellipse cx="30" cy="50" rx="3.5" ry="2" fill="none" stroke="#7ccab0" stroke-width="1"/><ellipse cx="50" cy="44" rx="3.5" ry="2" fill="none" stroke="#7ccab0" stroke-width="1"/><ellipse cx="58" cy="54" rx="3.5" ry="2" fill="none" stroke="#7ccab0" stroke-width="1"/></svg>
<div class="bm" style="left:127px;top:758px"></div><svg class="a" style="left:132px;top:762px" width="10" height="12" viewBox="0 0 10 12"><path d="M1.5 1 H8.5 V11 L5 8 L1.5 11 Z" fill="none" stroke="#555" stroke-width="1.1" stroke-linejoin="round"/></svg>
<svg class="a" style="left:76px;top:765px" width="10" height="10" viewBox="0 0 10 10"><circle cx="5" cy="5" r="5" fill="#8d1b86"/><rect x="3.4" y="3.4" width="3.2" height="3.2" transform="rotate(45 5 5)" fill="#fff"/></svg>
<svg class="a" style="left:135px;top:709px" width="9" height="9" viewBox="0 0 9 9"><path d="M2 8 H1 V4.5 Q1 1 4.5 1 Q8 1 8 4.5 V8 H4 V5.5 Q4 4.5 5.5 4.5" fill="none" stroke="#5cc09a" stroke-width="1.1"/></svg>
<div class="card" style="left:168px;top:705px;width:80px;border-radius:6px"></div>
<!--THUMB41--><svg class="a" style="left:168px;top:705px" width="80" height="76" viewBox="0 0 80 76"><path d="M10 12 Q26 6 40 30 Q36 50 28 54 Q20 50 18 40 Q8 36 10 12 Z" fill="none" stroke="#d88acb" stroke-width="1.1"/><path d="M14 16 Q26 14 36 30 M16 26 Q28 30 34 40 M20 40 Q26 42 32 48" fill="none" stroke="#d88acb" stroke-width="0.8"/><path d="M40 28 Q42 16 46 10 M40 28 Q44 18 50 12" fill="none" stroke="#d88acb" stroke-width="0.8"/><circle cx="48" cy="28" r="6" fill="#f7d8ec" stroke="#d88acb" stroke-width="1"/><circle cx="56" cy="20" r="5" fill="#fde6d6" stroke="#f0b890" stroke-width="1"/><circle cx="62" cy="32" r="5" fill="#f3dcf2" stroke="#dd88c8" stroke-width="1"/><circle cx="46" cy="42" r="6" fill="#f7d8ec" stroke="#d88acb" stroke-width="1"/><circle cx="55" cy="46" r="6" fill="#fde6d6" stroke="#f0b890" stroke-width="1"/><circle cx="64" cy="24" r="4" fill="#f3dcf2" stroke="#dd88c8" stroke-width="1"/><circle cx="50" cy="56" r="4" fill="#f7d8ec" stroke="#d88acb" stroke-width="1"/></svg>
<div class="bm" style="left:223px;top:758px"></div><svg class="a" style="left:228px;top:762px" width="10" height="12" viewBox="0 0 10 12"><path d="M1.5 1 H8.5 V11 L5 8 L1.5 11 Z" fill="none" stroke="#555" stroke-width="1.1" stroke-linejoin="round"/></svg>
<svg class="a" style="left:172px;top:765px" width="10" height="10" viewBox="0 0 10 10"><circle cx="5" cy="5" r="5" fill="#8d1b86"/><rect x="3.4" y="3.4" width="3.2" height="3.2" transform="rotate(45 5 5)" fill="#fff"/></svg>
<svg class="a" style="left:231px;top:709px" width="9" height="9" viewBox="0 0 9 9"><path d="M2 8 H1 V4.5 Q1 1 4.5 1 Q8 1 8 4.5 V8 H4 V5.5 Q4 4.5 5.5 4.5" fill="none" stroke="#5cc09a" stroke-width="1.1"/></svg>
<div class="card" style="left:264px;top:705px;width:54px;border-radius:6px 0 0 6px"></div>
<!--THUMB42--><svg class="a" style="left:264px;top:705px" width="54" height="76" viewBox="0 0 54 76"><rect x="11" y="4" width="45" height="58" fill="#fff"/><circle cx="15" cy="9" r="3.6" fill="#e6d6f2" stroke="#c2a0dc" stroke-width="1"/><circle cx="25" cy="9" r="3.6" fill="#e6d6f2" stroke="#c2a0dc" stroke-width="1"/><circle cx="35" cy="9" r="3.6" fill="#e6d6f2" stroke="#c2a0dc" stroke-width="1"/><circle cx="45" cy="9" r="3.6" fill="#e6d6f2" stroke="#c2a0dc" stroke-width="1"/><circle cx="55" cy="9" r="3.6" fill="#e6d6f2" stroke="#c2a0dc" stroke-width="1"/><circle cx="20" cy="20" r="3.6" fill="#e6d6f2" stroke="#c2a0dc" stroke-width="1"/><circle cx="30" cy="20" r="3.6" fill="#e6d6f2" stroke="#c2a0dc" stroke-width="1"/><circle cx="40" cy="20" r="3.6" fill="#e6d6f2" stroke="#c2a0dc" stroke-width="1"/><circle cx="50" cy="20" r="3.6" fill="#e6d6f2" stroke="#c2a0dc" stroke-width="1"/><circle cx="60" cy="20" r="3.6" fill="#e6d6f2" stroke="#c2a0dc" stroke-width="1"/><circle cx="15" cy="31" r="3.6" fill="#e6d6f2" stroke="#c2a0dc" stroke-width="1"/><circle cx="25" cy="31" r="3.6" fill="#e6d6f2" stroke="#c2a0dc" stroke-width="1"/><circle cx="35" cy="31" r="3.6" fill="#e6d6f2" stroke="#c2a0dc" stroke-width="1"/><circle cx="45" cy="31" r="3.6" fill="#e6d6f2" stroke="#c2a0dc" stroke-width="1"/><circle cx="55" cy="31" r="3.6" fill="#e6d6f2" stroke="#c2a0dc" stroke-width="1"/><circle cx="20" cy="42" r="3.6" fill="#e6d6f2" stroke="#c2a0dc" stroke-width="1"/><circle cx="30" cy="42" r="3.6" fill="#e6d6f2" stroke="#c2a0dc" stroke-width="1"/><circle cx="40" cy="42" r="3.6" fill="#e6d6f2" stroke="#c2a0dc" stroke-width="1"/><circle cx="50" cy="42" r="3.6" fill="#e6d6f2" stroke="#c2a0dc" stroke-width="1"/><circle cx="60" cy="42" r="3.6" fill="#e6d6f2" stroke="#c2a0dc" stroke-width="1"/><circle cx="15" cy="53" r="3.6" fill="#e6d6f2" stroke="#c2a0dc" stroke-width="1"/><circle cx="25" cy="53" r="3.6" fill="#e6d6f2" stroke="#c2a0dc" stroke-width="1"/><circle cx="35" cy="53" r="3.6" fill="#e6d6f2" stroke="#c2a0dc" stroke-width="1"/><circle cx="45" cy="53" r="3.6" fill="#e6d6f2" stroke="#c2a0dc" stroke-width="1"/><circle cx="55" cy="53" r="3.6" fill="#e6d6f2" stroke="#c2a0dc" stroke-width="1"/><path d="M20 20 l4 4" stroke="#9acb8a" stroke-width="1.2"/><path d="M40 30 l4 4" stroke="#9acb8a" stroke-width="1.2"/><path d="M30 48 l4 4" stroke="#9acb8a" stroke-width="1.2"/><path d="M50 14 l4 4" stroke="#9acb8a" stroke-width="1.2"/></svg>
<svg class="a" style="left:268px;top:765px" width="10" height="10" viewBox="0 0 10 10"><circle cx="5" cy="5" r="5" fill="#8d1b86"/><rect x="3.4" y="3.4" width="3.2" height="3.2" transform="rotate(45 5 5)" fill="#fff"/></svg>

<!-- PANEL SCROLLBAR -->
<div class="a" style="left:318px;top:97px;width:11px;height:402px;background:#c1c1c1"></div>
<svg class="a" style="left:320px;top:88px" width="8" height="6" viewBox="0 0 8 6"><path d="M1 5 L4 2 L7 5Z" fill="#a0a0a0"/></svg>
<svg class="a" style="left:320px;top:833px" width="8" height="6" viewBox="0 0 8 6"><path d="M1 1 L4 4.5 L7 1Z" fill="#222"/></svg>
<!-- TOOLBAR -->
<svg class="a" style="left:350px;top:94px" width="18" height="18" viewBox="0 0 18 18"><path d="M2 16 L2.8 12 L12.5 2.3 Q13.5 1.5 14.5 2.3 L15.7 3.5 Q16.5 4.5 15.7 5.5 L6 15.2 Z M11 4 L14 7" fill="none" stroke="#333" stroke-width="1.3" stroke-linejoin="round"/></svg>
<div class="a" style="left:383px;top:97px;width:1px;height:14px;background:#ddd"></div>
<svg class="a" style="left:398px;top:95px" width="18" height="16" viewBox="0 0 18 16"><path d="M5 2 L1.8 5.2 L5 8.4" fill="none" stroke="#333" stroke-width="1.3"/><path d="M2 5.2 H11 Q15.5 5.2 15.5 9.5 Q15.5 13.8 11 13.8 H6" fill="none" stroke="#333" stroke-width="1.3"/></svg>
<svg class="a" style="left:433px;top:95px" width="18" height="16" viewBox="0 0 18 16"><path d="M13 2 L16.2 5.2 L13 8.4" fill="none" stroke="#b5b5b5" stroke-width="1.3"/><path d="M16 5.2 H7 Q2.5 5.2 2.5 9.5 Q2.5 13.8 7 13.8 H12" fill="none" stroke="#b5b5b5" stroke-width="1.3"/></svg>
<div class="a" style="left:467px;top:97px;width:1px;height:14px;background:#ddd"></div>
<div class="a" style="left:481px;top:92px;width:132px;height:24px;border-radius:6px;border:1px solid #e8e8e8;box-shadow:0 1px 2px rgba(0,0,0,.05)"></div>
<svg class="a" style="left:487px;top:96px" width="18" height="16" viewBox="0 0 18 16"><circle cx="13.5" cy="4" r="2.8" fill="none" stroke="#333" stroke-width="1.3"/><circle cx="13.5" cy="12" r="2.8" fill="none" stroke="#333" stroke-width="1.3"/><path d="M11 5.5 L1 11 M11 10.5 L1 5 M1 3 L4 5.5 M1 13 L4 10.5" fill="none" stroke="#333" stroke-width="1.3"/></svg>
<div class="t" style="left:512px;top:98px;font-size:11px;color:#555">Basic Cut</div>
<svg class="a" style="left:595px;top:100px" width="11" height="8" viewBox="0 0 11 8"><path d="M1.5 1.5 L5.5 5.5 L9.5 1.5" fill="none" stroke="#333" stroke-width="1.4"/></svg>
<div class="a" style="left:618px;top:97px;width:14px;height:13px;border:1px solid #d8d8d8;border-radius:2px"></div>
<div class="t" style="left:618px;top:100px;width:14px;text-align:center;font-size:7px;color:#999">?</div>
<div class="a" style="left:644px;top:97px;width:1px;height:14px;background:#ddd"></div>
<div class="a" style="left:652px;top:92px;width:76px;height:24px;border-radius:6px;border:1px solid #ececec;box-shadow:0 1px 2px rgba(0,0,0,.04)"></div>
<div class="t" style="left:658px;top:99px;font-size:11px;color:#888">W</div>
<div class="t" style="left:675px;top:99px;font-size:11px;color:#555">5.8</div>
<svg class="a" style="left:735px;top:97px" width="9" height="12" viewBox="0 0 9 12"><path d="M2.2 5.5 V3.8 Q2.2 1.2 4.5 1.2 Q6.8 1.2 6.8 3.8 V5.5" fill="none" stroke="#333" stroke-width="1.2"/><rect x="1" y="5.3" width="7" height="5.7" rx="1" fill="none" stroke="#333" stroke-width="1.2"/><circle cx="4.5" cy="8" r="0.9" fill="#333"/></svg>
<div class="a" style="left:751px;top:92px;width:77px;height:24px;border-radius:6px;border:1px solid #ececec;box-shadow:0 1px 2px rgba(0,0,0,.04)"></div>
<div class="t" style="left:758px;top:99px;font-size:11px;color:#888">H</div>
<div class="t" style="left:773px;top:99px;font-size:11px;color:#555">6</div>
<div class="a" style="left:835px;top:97px;width:1px;height:14px;background:#ddd"></div>
<div class="a" style="left:848px;top:92px;width:100px;height:24px;border-radius:6px;border:1px solid #ececec;box-shadow:0 1px 2px rgba(0,0,0,.04)"></div>
<svg class="a" style="left:856px;top:96px" width="17" height="16" viewBox="0 0 17 16"><rect x="1.5" y="1.5" width="9" height="9" fill="none" stroke="#333" stroke-width="1.2"/><path d="M6 10.5 V14.5 H15 V5.5 H10.5" fill="none" stroke="#333" stroke-width="1.2"/></svg>
<div class="t" style="left:880px;top:98px;font-size:11.2px;color:#555">Arrange</div>
<svg class="a" style="left:930px;top:100px" width="11" height="8" viewBox="0 0 11 8"><path d="M1.5 1.5 L5.5 5.5 L9.5 1.5" fill="none" stroke="#333" stroke-width="1.4"/></svg>
<svg class="a" style="left:965px;top:95px" width="17" height="17" viewBox="0 0 17 17"><path d="M7 1.5 L1.5 15.5 H7 Z M10 1.5 L15.5 15.5 H10 Z" fill="none" stroke="#333" stroke-width="1.3" stroke-linejoin="round"/></svg>
<svg class="a" style="left:995px;top:95px" width="18" height="17" viewBox="0 0 18 17"><path d="M16.5 1.5 L1.5 7.6 H16.5 Z M16.5 15.5 L1.5 9.4 H16.5 Z" fill="none" stroke="#333" stroke-width="1.3" stroke-linejoin="round"/></svg>

<div class="a" style="left:333px;top:123px;width:905px;height:19px;background:#f3f3f3;border-top:1px solid #e2e2e2"></div>
<div class="a" style="left:333px;top:141px;width:19px;height:690px;background:#f3f3f3"></div>
<div class="a" style="left:330px;top:424px;width:13px;height:74px;background:#fff;border-radius:0 4px 4px 0"></div>
<svg class="a" style="left:332px;top:458px" width="7" height="10" viewBox="0 0 7 10"><path d="M5.5 1.5 L2 5 L5.5 8.5" fill="none" stroke="#222" stroke-width="1.4"/></svg>
<svg class="a" style="left:333px;top:123px" width="905" height="19" viewBox="0 0 905 19"><line x1="20.5" y1="1" x2="20.5" y2="19" stroke="#dedede" stroke-width="1"/><line x1="27.5" y1="16" x2="27.5" y2="19" stroke="#dedede" stroke-width="1"/><line x1="34.5" y1="16" x2="34.5" y2="19" stroke="#dedede" stroke-width="1"/><line x1="41.5" y1="16" x2="41.5" y2="19" stroke="#dedede" stroke-width="1"/><line x1="48.5" y1="14" x2="48.5" y2="19" stroke="#dedede" stroke-width="1"/><line x1="55.5" y1="16" x2="55.5" y2="19" stroke="#dedede" stroke-width="1"/><line x1="62.5" y1="16" x2="62.5" y2="19" stroke="#dedede" stroke-width="1"/><line x1="69.5" y1="16" x2="69.5" y2="19" stroke="#dedede" stroke-width="1"/><line x1="76.5" y1="1" x2="76.5" y2="19" stroke="#dedede" stroke-width="1"/><line x1="83.5" y1="16" x2="83.5" y2="19" stroke="#dedede" stroke-width="1"/><line x1="90.5" y1="16" x2="90.5" y2="19" stroke="#dedede" stroke-width="1"/><line x1="97.5" y1="16" x2="97.5" y2="19" stroke="#dedede" stroke-width="1"/><line x1="104.5" y1="14" x2="104.5" y2="19" stroke="#dedede" stroke-width="1"/><line x1="111.5" y1="16" x2="111.5" y2="19" stroke="#dedede" stroke-width="1"/><line x1="118.5" y1="16" x2="118.5" y2="19" stroke="#dedede" stroke-width="1"/><line x1="125.5" y1="16" x2="125.5" y2="19" stroke="#dedede" stroke-width="1"/><line x1="132.5" y1="1" x2="132.5" y2="19" stroke="#dedede" stroke-width="1"/><line x1="139.5" y1="16" x2="139.5" y2="19" stroke="#dedede" stroke-width="1"/><line x1="146.5" y1="16" x2="146.5" y2="19" stroke="#dedede" stroke-width="1"/><line x1="153.5" y1="16" x2="153.5" y2="19" stroke="#dedede" stroke-width="1"/><line x1="160.5" y1="14" x2="160.5" y2="19" stroke="#dedede" stroke-width="1"/><line x1="167.5" y1="16" x2="167.5" y2="19" stroke="#dedede" stroke-width="1"/><line x1="174.5" y1="16" x2="174.5" y2="19" stroke="#dedede" stroke-width="1"/><line x1="181.5" y1="16" x2="181.5" y2="19" stroke="#dedede" stroke-width="1"/><line x1="188.5" y1="1" x2="188.5" y2="19" stroke="#dedede" stroke-width="1"/><line x1="195.5" y1="16" x2="195.5" y2="19" stroke="#dedede" stroke-width="1"/><line x1="202.5" y1="16" x2="202.5" y2="19" stroke="#dedede" stroke-width="1"/><line x1="209.5" y1="16" x2="209.5" y2="19" stroke="#dedede" stroke-width="1"/><line x1="216.5" y1="14" x2="216.5" y2="19" stroke="#dedede" stroke-width="1"/><line x1="223.5" y1="16" x2="223.5" y2="19" stroke="#dedede" stroke-width="1"/><line x1="231.5" y1="16" x2="231.5" y2="19" stroke="#dedede" stroke-width="1"/><line x1="238.5" y1="16" x2="238.5" y2="19" stroke="#dedede" stroke-width="1"/><line x1="245.5" y1="1" x2="245.5" y2="19" stroke="#dedede" stroke-width="1"/><line x1="252.5" y1="16" x2="252.5" y2="19" stroke="#dedede" stroke-width="1"/><line x1="259.5" y1="16" x2="259.5" y2="19" stroke="#dedede" stroke-width="1"/><line x1="266.5" y1="16" x2="266.5" y2="19" stroke="#dedede" stroke-width="1"/><line x1="273.5" y1="14" x2="273.5" y2="19" stroke="#dedede" stroke-width="1"/><line x1="280.5" y1="16" x2="280.5" y2="19" stroke="#dedede" stroke-width="1"/><line x1="287.5" y1="16" x2="287.5" y2="19" stroke="#dedede" stroke-width="1"/><line x1="294.5" y1="16" x2="294.5" y2="19" stroke="#dedede" stroke-width="1"/><line x1="301.5" y1="1" x2="301.5" y2="19" stroke="#dedede" stroke-width="1"/><line x1="308.5" y1="16" x2="308.5" y2="19" stroke="#dedede" stroke-width="1"/><line x1="315.5" y1="16" x2="315.5" y2="19" stroke="#dedede" stroke-width="1"/><line x1="322.5" y1="16" x2="322.5" y2="19" stroke="#dedede" stroke-width="1"/><line x1="329.5" y1="14" x2="329.5" y2="19" stroke="#dedede" stroke-width="1"/><line x1="336.5" y1="16" x2="336.5" y2="19" stroke="#dedede" stroke-width="1"/><line x1="343.5" y1="16" x2="343.5" y2="19" stroke="#dedede" stroke-width="1"/><line x1="350.5" y1="16" x2="350.5" y2="19" stroke="#dedede" stroke-width="1"/><line x1="357.5" y1="1" x2="357.5" y2="19" stroke="#dedede" stroke-width="1"/><line x1="364.5" y1="16" x2="364.5" y2="19" stroke="#dedede" stroke-width="1"/><line x1="371.5" y1="16" x2="371.5" y2="19" stroke="#dedede" stroke-width="1"/><line x1="378.5" y1="16" x2="378.5" y2="19" stroke="#dedede" stroke-width="1"/><line x1="385.5" y1="14" x2="385.5" y2="19" stroke="#dedede" stroke-width="1"/><line x1="392.5" y1="16" x2="392.5" y2="19" stroke="#dedede" stroke-width="1"/><line x1="399.5" y1="16" x2="399.5" y2="19" stroke="#dedede" stroke-width="1"/><line x1="406.5" y1="16" x2="406.5" y2="19" stroke="#dedede" stroke-width="1"/><line x1="413.5" y1="1" x2="413.5" y2="19" stroke="#dedede" stroke-width="1"/><line x1="420.5" y1="16" x2="420.5" y2="19" stroke="#dedede" stroke-width="1"/><line x1="427.5" y1="16" x2="427.5" y2="19" stroke="#dedede" stroke-width="1"/><line x1="434.5" y1="16" x2="434.5" y2="19" stroke="#dedede" stroke-width="1"/><line x1="442.5" y1="14" x2="442.5" y2="19" stroke="#dedede" stroke-width="1"/><line x1="449.5" y1="16" x2="449.5" y2="19" stroke="#dedede" stroke-width="1"/><line x1="456.5" y1="16" x2="456.5" y2="19" stroke="#dedede" stroke-width="1"/><line x1="463.5" y1="16" x2="463.5" y2="19" stroke="#dedede" stroke-width="1"/><line x1="470.5" y1="1" x2="470.5" y2="19" stroke="#dedede" stroke-width="1"/><line x1="477.5" y1="16" x2="477.5" y2="19" stroke="#dedede" stroke-width="1"/><line x1="484.5" y1="16" x2="484.5" y2="19" stroke="#dedede" stroke-width="1"/><line x1="491.5" y1="16" x2="491.5" y2="19" stroke="#dedede" stroke-width="1"/><line x1="498.5" y1="14" x2="498.5" y2="19" stroke="#dedede" stroke-width="1"/><line x1="505.5" y1="16" x2="505.5" y2="19" stroke="#dedede" stroke-width="1"/><line x1="512.5" y1="16" x2="512.5" y2="19" stroke="#dedede" stroke-width="1"/><line x1="519.5" y1="16" x2="519.5" y2="19" stroke="#dedede" stroke-width="1"/><line x1="526.5" y1="1" x2="526.5" y2="19" stroke="#dedede" stroke-width="1"/><line x1="533.5" y1="16" x2="533.5" y2="19" stroke="#dedede" stroke-width="1"/><line x1="540.5" y1="16" x2="540.5" y2="19" stroke="#dedede" stroke-width="1"/><line x1="547.5" y1="16" x2="547.5" y2="19" stroke="#dedede" stroke-width="1"/><line x1="554.5" y1="14" x2="554.5" y2="19" stroke="#dedede" stroke-width="1"/><line x1="561.5" y1="16" x2="561.5" y2="19" stroke="#dedede" stroke-width="1"/><line x1="568.5" y1="16" x2="568.5" y2="19" stroke="#dedede" stroke-width="1"/><line x1="575.5" y1="16" x2="575.5" y2="19" stroke="#dedede" stroke-width="1"/><line x1="582.5" y1="1" x2="582.5" y2="19" stroke="#dedede" stroke-width="1"/><line x1="589.5" y1="16" x2="589.5" y2="19" stroke="#dedede" stroke-width="1"/><line x1="596.5" y1="16" x2="596.5" y2="19" stroke="#dedede" stroke-width="1"/><line x1="603.5" y1="16" x2="603.5" y2="19" stroke="#dedede" stroke-width="1"/><line x1="610.5" y1="14" x2="610.5" y2="19" stroke="#dedede" stroke-width="1"/><line x1="617.5" y1="16" x2="617.5" y2="19" stroke="#dedede" stroke-width="1"/><line x1="624.5" y1="16" x2="624.5" y2="19" stroke="#dedede" stroke-width="1"/><line x1="631.5" y1="16" x2="631.5" y2="19" stroke="#dedede" stroke-width="1"/><line x1="638.5" y1="1" x2="638.5" y2="19" stroke="#dedede" stroke-width="1"/><line x1="646.5" y1="16" x2="646.5" y2="19" stroke="#dedede" stroke-width="1"/><line x1="653.5" y1="16" x2="653.5" y2="19" stroke="#dedede" stroke-width="1"/><line x1="660.5" y1="16" x2="660.5" y2="19" stroke="#dedede" stroke-width="1"/><line x1="667.5" y1="14" x2="667.5" y2="19" stroke="#dedede" stroke-width="1"/><line x1="674.5" y1="16" x2="674.5" y2="19" stroke="#dedede" stroke-width="1"/><line x1="681.5" y1="16" x2="681.5" y2="19" stroke="#dedede" stroke-width="1"/><line x1="688.5" y1="16" x2="688.5" y2="19" stroke="#dedede" stroke-width="1"/><line x1="695.5" y1="1" x2="695.5" y2="19" stroke="#dedede" stroke-width="1"/><line x1="702.5" y1="16" x2="702.5" y2="19" stroke="#dedede" stroke-width="1"/><line x1="709.5" y1="16" x2="709.5" y2="19" stroke="#dedede" stroke-width="1"/><line x1="716.5" y1="16" x2="716.5" y2="19" stroke="#dedede" stroke-width="1"/><line x1="723.5" y1="14" x2="723.5" y2="19" stroke="#dedede" stroke-width="1"/><line x1="730.5" y1="16" x2="730.5" y2="19" stroke="#dedede" stroke-width="1"/><line x1="737.5" y1="16" x2="737.5" y2="19" stroke="#dedede" stroke-width="1"/><line x1="744.5" y1="16" x2="744.5" y2="19" stroke="#dedede" stroke-width="1"/><line x1="751.5" y1="1" x2="751.5" y2="19" stroke="#dedede" stroke-width="1"/><line x1="758.5" y1="16" x2="758.5" y2="19" stroke="#dedede" stroke-width="1"/><line x1="765.5" y1="16" x2="765.5" y2="19" stroke="#dedede" stroke-width="1"/><line x1="772.5" y1="16" x2="772.5" y2="19" stroke="#dedede" stroke-width="1"/><line x1="779.5" y1="14" x2="779.5" y2="19" stroke="#dedede" stroke-width="1"/><line x1="786.5" y1="16" x2="786.5" y2="19" stroke="#dedede" stroke-width="1"/><line x1="793.5" y1="16" x2="793.5" y2="19" stroke="#dedede" stroke-width="1"/><line x1="800.5" y1="16" x2="800.5" y2="19" stroke="#dedede" stroke-width="1"/><line x1="807.5" y1="1" x2="807.5" y2="19" stroke="#dedede" stroke-width="1"/><line x1="814.5" y1="16" x2="814.5" y2="19" stroke="#dedede" stroke-width="1"/><line x1="821.5" y1="16" x2="821.5" y2="19" stroke="#dedede" stroke-width="1"/><line x1="828.5" y1="16" x2="828.5" y2="19" stroke="#dedede" stroke-width="1"/><line x1="835.5" y1="14" x2="835.5" y2="19" stroke="#dedede" stroke-width="1"/><line x1="842.5" y1="16" x2="842.5" y2="19" stroke="#dedede" stroke-width="1"/><line x1="849.5" y1="16" x2="849.5" y2="19" stroke="#dedede" stroke-width="1"/><line x1="857.5" y1="16" x2="857.5" y2="19" stroke="#dedede" stroke-width="1"/><line x1="864.5" y1="1" x2="864.5" y2="19" stroke="#dedede" stroke-width="1"/><line x1="871.5" y1="16" x2="871.5" y2="19" stroke="#dedede" stroke-width="1"/><line x1="878.5" y1="16" x2="878.5" y2="19" stroke="#dedede" stroke-width="1"/><line x1="885.5" y1="16" x2="885.5" y2="19" stroke="#dedede" stroke-width="1"/><line x1="892.5" y1="14" x2="892.5" y2="19" stroke="#dedede" stroke-width="1"/><line x1="899.5" y1="16" x2="899.5" y2="19" stroke="#dedede" stroke-width="1"/><line x1="19.5" y1="0" x2="19.5" y2="19" stroke="#e0e0e0"/><line x1="0" y1="18.5" x2="905" y2="18.5" stroke="#e6e6e6"/></svg>
<div class="t" style="left:355.5px;top:127px;font-size:8.5px;color:#777">0</div>
<div class="t" style="left:411.8px;top:127px;font-size:8.5px;color:#777">1</div>
<div class="t" style="left:468.0px;top:127px;font-size:8.5px;color:#777">2</div>
<div class="t" style="left:524.3px;top:127px;font-size:8.5px;color:#777">3</div>
<div class="t" style="left:580.6px;top:127px;font-size:8.5px;color:#777">4</div>
<div class="t" style="left:636.9px;top:127px;font-size:8.5px;color:#777">5</div>
<div class="t" style="left:693.1px;top:127px;font-size:8.5px;color:#777">6</div>
<div class="t" style="left:749.4px;top:127px;font-size:8.5px;color:#777">7</div>
<div class="t" style="left:805.7px;top:127px;font-size:8.5px;color:#777">8</div>
<div class="t" style="left:861.9px;top:127px;font-size:8.5px;color:#777">9</div>
<div class="t" style="left:918.2px;top:127px;font-size:8.5px;color:#777">10</div>
<div class="t" style="left:974.5px;top:127px;font-size:8.5px;color:#777">11</div>
<div class="t" style="left:1030.7px;top:127px;font-size:8.5px;color:#777">12</div>
<div class="t" style="left:1087.0px;top:127px;font-size:8.5px;color:#777">13</div>
<div class="t" style="left:1143.3px;top:127px;font-size:8.5px;color:#777">14</div>
<div class="t" style="left:1199.6px;top:127px;font-size:8.5px;color:#777">15</div>
<svg class="a" style="left:333px;top:141px" width="19" height="690" viewBox="0 0 19 690"><line x1="0" y1="0.5" x2="19" y2="0.5" stroke="#dedede" stroke-width="1"/><line x1="16" y1="7.5" x2="19" y2="7.5" stroke="#dedede" stroke-width="1"/><line x1="16" y1="14.5" x2="19" y2="14.5" stroke="#dedede" stroke-width="1"/><line x1="16" y1="21.5" x2="19" y2="21.5" stroke="#dedede" stroke-width="1"/><line x1="14" y1="28.5" x2="19" y2="28.5" stroke="#dedede" stroke-width="1"/><line x1="16" y1="35.5" x2="19" y2="35.5" stroke="#dedede" stroke-width="1"/><line x1="16" y1="42.5" x2="19" y2="42.5" stroke="#dedede" stroke-width="1"/><line x1="16" y1="49.5" x2="19" y2="49.5" stroke="#dedede" stroke-width="1"/><line x1="0" y1="56.5" x2="19" y2="56.5" stroke="#dedede" stroke-width="1"/><line x1="16" y1="63.5" x2="19" y2="63.5" stroke="#dedede" stroke-width="1"/><line x1="16" y1="70.5" x2="19" y2="70.5" stroke="#dedede" stroke-width="1"/><line x1="16" y1="77.5" x2="19" y2="77.5" stroke="#dedede" stroke-width="1"/><line x1="14" y1="84.5" x2="19" y2="84.5" stroke="#dedede" stroke-width="1"/><line x1="16" y1="91.5" x2="19" y2="91.5" stroke="#dedede" stroke-width="1"/><line x1="16" y1="98.5" x2="19" y2="98.5" stroke="#dedede" stroke-width="1"/><line x1="16" y1="106.5" x2="19" y2="106.5" stroke="#dedede" stroke-width="1"/><line x1="0" y1="113.5" x2="19" y2="113.5" stroke="#dedede" stroke-width="1"/><line x1="16" y1="120.5" x2="19" y2="120.5" stroke="#dedede" stroke-width="1"/><line x1="16" y1="127.5" x2="19" y2="127.5" stroke="#dedede" stroke-width="1"/><line x1="16" y1="134.5" x2="19" y2="134.5" stroke="#dedede" stroke-width="1"/><line x1="14" y1="141.5" x2="19" y2="141.5" stroke="#dedede" stroke-width="1"/><line x1="16" y1="148.5" x2="19" y2="148.5" stroke="#dedede" stroke-width="1"/><line x1="16" y1="155.5" x2="19" y2="155.5" stroke="#dedede" stroke-width="1"/><line x1="16" y1="162.5" x2="19" y2="162.5" stroke="#dedede" stroke-width="1"/><line x1="0" y1="169.5" x2="19" y2="169.5" stroke="#dedede" stroke-width="1"/><line x1="16" y1="176.5" x2="19" y2="176.5" stroke="#dedede" stroke-width="1"/><line x1="16" y1="183.5" x2="19" y2="183.5" stroke="#dedede" stroke-width="1"/><line x1="16" y1="190.5" x2="19" y2="190.5" stroke="#dedede" stroke-width="1"/><line x1="14" y1="197.5" x2="19" y2="197.5" stroke="#dedede" stroke-width="1"/><line x1="16" y1="204.5" x2="19" y2="204.5" stroke="#dedede" stroke-width="1"/><line x1="16" y1="211.5" x2="19" y2="211.5" stroke="#dedede" stroke-width="1"/><line x1="16" y1="218.5" x2="19" y2="218.5" stroke="#dedede" stroke-width="1"/><line x1="0" y1="225.5" x2="19" y2="225.5" stroke="#dedede" stroke-width="1"/><line x1="16" y1="232.5" x2="19" y2="232.5" stroke="#dedede" stroke-width="1"/><line x1="16" y1="239.5" x2="19" y2="239.5" stroke="#dedede" stroke-width="1"/><line x1="16" y1="246.5" x2="19" y2="246.5" stroke="#dedede" stroke-width="1"/><line x1="14" y1="253.5" x2="19" y2="253.5" stroke="#dedede" stroke-width="1"/><line x1="16" y1="260.5" x2="19" y2="260.5" stroke="#dedede" stroke-width="1"/><line x1="16" y1="267.5" x2="19" y2="267.5" stroke="#dedede" stroke-width="1"/><line x1="16" y1="274.5" x2="19" y2="274.5" stroke="#dedede" stroke-width="1"/><line x1="0" y1="281.5" x2="19" y2="281.5" stroke="#dedede" stroke-width="1"/><line x1="16" y1="288.5" x2="19" y2="288.5" stroke="#dedede" stroke-width="1"/><line x1="16" y1="295.5" x2="19" y2="295.5" stroke="#dedede" stroke-width="1"/><line x1="16" y1="302.5" x2="19" y2="302.5" stroke="#dedede" stroke-width="1"/><line x1="14" y1="309.5" x2="19" y2="309.5" stroke="#dedede" stroke-width="1"/><line x1="16" y1="317.5" x2="19" y2="317.5" stroke="#dedede" stroke-width="1"/><line x1="16" y1="324.5" x2="19" y2="324.5" stroke="#dedede" stroke-width="1"/><line x1="16" y1="331.5" x2="19" y2="331.5" stroke="#dedede" stroke-width="1"/><line x1="0" y1="338.5" x2="19" y2="338.5" stroke="#dedede" stroke-width="1"/><line x1="16" y1="345.5" x2="19" y2="345.5" stroke="#dedede" stroke-width="1"/><line x1="16" y1="352.5" x2="19" y2="352.5" stroke="#dedede" stroke-width="1"/><line x1="16" y1="359.5" x2="19" y2="359.5" stroke="#dedede" stroke-width="1"/><line x1="14" y1="366.5" x2="19" y2="366.5" stroke="#dedede" stroke-width="1"/><line x1="16" y1="373.5" x2="19" y2="373.5" stroke="#dedede" stroke-width="1"/><line x1="16" y1="380.5" x2="19" y2="380.5" stroke="#dedede" stroke-width="1"/><line x1="16" y1="387.5" x2="19" y2="387.5" stroke="#dedede" stroke-width="1"/><line x1="0" y1="394.5" x2="19" y2="394.5" stroke="#dedede" stroke-width="1"/><line x1="16" y1="401.5" x2="19" y2="401.5" stroke="#dedede" stroke-width="1"/><line x1="16" y1="408.5" x2="19" y2="408.5" stroke="#dedede" stroke-width="1"/><line x1="16" y1="415.5" x2="19" y2="415.5" stroke="#dedede" stroke-width="1"/><line x1="14" y1="422.5" x2="19" y2="422.5" stroke="#dedede" stroke-width="1"/><line x1="16" y1="429.5" x2="19" y2="429.5" stroke="#dedede" stroke-width="1"/><line x1="16" y1="436.5" x2="19" y2="436.5" stroke="#dedede" stroke-width="1"/><line x1="16" y1="443.5" x2="19" y2="443.5" stroke="#dedede" stroke-width="1"/><line x1="0" y1="450.5" x2="19" y2="450.5" stroke="#dedede" stroke-width="1"/><line x1="16" y1="457.5" x2="19" y2="457.5" stroke="#dedede" stroke-width="1"/><line x1="16" y1="464.5" x2="19" y2="464.5" stroke="#dedede" stroke-width="1"/><line x1="16" y1="471.5" x2="19" y2="471.5" stroke="#dedede" stroke-width="1"/><line x1="14" y1="478.5" x2="19" y2="478.5" stroke="#dedede" stroke-width="1"/><line x1="16" y1="485.5" x2="19" y2="485.5" stroke="#dedede" stroke-width="1"/><line x1="16" y1="492.5" x2="19" y2="492.5" stroke="#dedede" stroke-width="1"/><line x1="16" y1="499.5" x2="19" y2="499.5" stroke="#dedede" stroke-width="1"/><line x1="0" y1="506.5" x2="19" y2="506.5" stroke="#dedede" stroke-width="1"/><line x1="16" y1="513.5" x2="19" y2="513.5" stroke="#dedede" stroke-width="1"/><line x1="16" y1="520.5" x2="19" y2="520.5" stroke="#dedede" stroke-width="1"/><line x1="16" y1="528.5" x2="19" y2="528.5" stroke="#dedede" stroke-width="1"/><line x1="14" y1="535.5" x2="19" y2="535.5" stroke="#dedede" stroke-width="1"/><line x1="16" y1="542.5" x2="19" y2="542.5" stroke="#dedede" stroke-width="1"/><line x1="16" y1="549.5" x2="19" y2="549.5" stroke="#dedede" stroke-width="1"/><line x1="16" y1="556.5" x2="19" y2="556.5" stroke="#dedede" stroke-width="1"/><line x1="0" y1="563.5" x2="19" y2="563.5" stroke="#dedede" stroke-width="1"/><line x1="16" y1="570.5" x2="19" y2="570.5" stroke="#dedede" stroke-width="1"/><line x1="16" y1="577.5" x2="19" y2="577.5" stroke="#dedede" stroke-width="1"/><line x1="16" y1="584.5" x2="19" y2="584.5" stroke="#dedede" stroke-width="1"/><line x1="14" y1="591.5" x2="19" y2="591.5" stroke="#dedede" stroke-width="1"/><line x1="16" y1="598.5" x2="19" y2="598.5" stroke="#dedede" stroke-width="1"/><line x1="16" y1="605.5" x2="19" y2="605.5" stroke="#dedede" stroke-width="1"/><line x1="16" y1="612.5" x2="19" y2="612.5" stroke="#dedede" stroke-width="1"/><line x1="0" y1="619.5" x2="19" y2="619.5" stroke="#dedede" stroke-width="1"/><line x1="16" y1="626.5" x2="19" y2="626.5" stroke="#dedede" stroke-width="1"/><line x1="16" y1="633.5" x2="19" y2="633.5" stroke="#dedede" stroke-width="1"/><line x1="16" y1="640.5" x2="19" y2="640.5" stroke="#dedede" stroke-width="1"/><line x1="14" y1="647.5" x2="19" y2="647.5" stroke="#dedede" stroke-width="1"/><line x1="16" y1="654.5" x2="19" y2="654.5" stroke="#dedede" stroke-width="1"/><line x1="16" y1="661.5" x2="19" y2="661.5" stroke="#dedede" stroke-width="1"/><line x1="16" y1="668.5" x2="19" y2="668.5" stroke="#dedede" stroke-width="1"/><line x1="0" y1="675.5" x2="19" y2="675.5" stroke="#dedede" stroke-width="1"/><line x1="16" y1="682.5" x2="19" y2="682.5" stroke="#dedede" stroke-width="1"/><line x1="16" y1="689.5" x2="19" y2="689.5" stroke="#dedede" stroke-width="1"/><line x1="18.5" y1="0" x2="18.5" y2="690" stroke="#e6e6e6"/></svg>
<div class="t" style="left:332px;top:143.0px;width:16px;height:10px;text-align:center;font-size:8.5px;color:#777;transform:rotate(-90deg)">0</div>
<div class="t" style="left:332px;top:199.3px;width:16px;height:10px;text-align:center;font-size:8.5px;color:#777;transform:rotate(-90deg)">1</div>
<div class="t" style="left:332px;top:255.5px;width:16px;height:10px;text-align:center;font-size:8.5px;color:#777;transform:rotate(-90deg)">2</div>
<div class="t" style="left:332px;top:311.8px;width:16px;height:10px;text-align:center;font-size:8.5px;color:#777;transform:rotate(-90deg)">3</div>
<div class="t" style="left:332px;top:368.1px;width:16px;height:10px;text-align:center;font-size:8.5px;color:#777;transform:rotate(-90deg)">4</div>
<div class="t" style="left:332px;top:424.4px;width:16px;height:10px;text-align:center;font-size:8.5px;color:#777;transform:rotate(-90deg)">5</div>
<div class="t" style="left:332px;top:480.6px;width:16px;height:10px;text-align:center;font-size:8.5px;color:#777;transform:rotate(-90deg)">6</div>
<div class="t" style="left:332px;top:536.9px;width:16px;height:10px;text-align:center;font-size:8.5px;color:#777;transform:rotate(-90deg)">7</div>
<div class="t" style="left:332px;top:593.2px;width:16px;height:10px;text-align:center;font-size:8.5px;color:#777;transform:rotate(-90deg)">8</div>
<div class="t" style="left:332px;top:649.4px;width:16px;height:10px;text-align:center;font-size:8.5px;color:#777;transform:rotate(-90deg)">9</div>
<div class="t" style="left:332px;top:705.7px;width:16px;height:10px;text-align:center;font-size:8.5px;color:#777;transform:rotate(-90deg)">10</div>
<div class="t" style="left:332px;top:762.0px;width:16px;height:10px;text-align:center;font-size:8.5px;color:#777;transform:rotate(-90deg)">11</div>
<div class="t" style="left:332px;top:818.2px;width:16px;height:10px;text-align:center;font-size:8.5px;color:#777;transform:rotate(-90deg)">12</div>
<div class="a" style="left:1238px;top:122px;width:15px;height:709px;background:#f1f1f1"></div>
<div class="a" style="left:1240px;top:137px;width:11px;height:34px;background:#c1c1c1"></div>
<svg class="a" style="left:1242px;top:127px" width="8" height="6" viewBox="0 0 8 6"><path d="M1 5 L4 2 L7 5Z" fill="#a0a0a0"/></svg>
<svg class="a" style="left:1242px;top:821px" width="8" height="6" viewBox="0 0 8 6"><path d="M1 1 L4 4.5 L7 1Z" fill="#222"/></svg>
<div class="a" style="left:333px;top:831px;width:920px;height:12px;background:#f1f1f1"></div>
<div class="a" style="left:347px;top:832px;width:56px;height:11px;background:#c1c1c1"></div>
<svg class="a" style="left:337px;top:834px" width="6" height="8" viewBox="0 0 6 8"><path d="M5 1 L2 4 L5 7Z" fill="#a0a0a0"/></svg>
<svg class="a" style="left:1231px;top:833px" width="6" height="8" viewBox="0 0 6 8"><path d="M1 1 L4.5 4 L1 7Z" fill="#222"/></svg>


<!-- RIGHT PANEL -->
<div class="t" style="left:1269px;top:98px;font-size:10.6px;font-weight:bold;color:#1f8f69">Layers</div>
<div class="t" style="left:1327px;top:98px;font-size:11.3px;color:#666">Material Colors</div>
<svg class="a" style="left:1473px;top:99px" width="13" height="13" viewBox="0 0 13 13"><path d="M1.5 1.5 L11.5 11.5 M11.5 1.5 L1.5 11.5" stroke="#333" stroke-width="1.4"/></svg>
<div class="a" style="left:1256px;top:119px;width:59px;height:3px;background:#168c57"></div>
<div class="a" style="left:1256px;top:122px;width:244px;height:1px;background:#ececec"></div>
<svg class="a" style="left:1270px;top:132px" width="16" height="16" viewBox="0 0 16 16"><g fill="none" stroke="#333" stroke-width="1.1"><circle cx="2.5" cy="2.5" r="1.5"/><circle cx="8" cy="2.5" r="1.5"/><circle cx="2.5" cy="8" r="1.5"/><circle cx="8" cy="8" r="1.5"/><circle cx="13.5" cy="8" r="1.5"/><circle cx="8" cy="13.5" r="1.5"/><circle cx="13.5" cy="13.5" r="1.5"/><path d="M4 2.5 H6.5 M2.5 4 V6.5 M9.5 8 H12 M8 9.5 V12 M13.5 9.5 V12 M9.5 13.5 H12 M4 8 H6.5 M8 4 V6.5"/></g></svg>
<svg class="a" style="left:1301px;top:132px" width="17" height="17" viewBox="0 0 17 17"><path d="M4.5 12 H1.5 V1.5 H12 V4.5" fill="none" stroke="#333" stroke-width="1.2"/><rect x="4.5" y="4.5" width="11" height="11" rx="1" fill="none" stroke="#333" stroke-width="1.2"/><path d="M10 7 V13 M7 10 H13" stroke="#333" stroke-width="1.2"/></svg>
<svg class="a" style="left:1332px;top:132px" width="16" height="17" viewBox="0 0 16 17"><path d="M1 3.5 H15 M5.5 3.5 V1.5 H10.5 V3.5 M2.8 3.5 L3.8 15.5 H12.2 L13.2 3.5 M6.5 6.5 V12.5 M9.5 6.5 V12.5" fill="none" stroke="#333" stroke-width="1.2"/></svg>
<div class="a" style="left:1256px;top:160px;width:231px;height:1px;background:#eeeeee"></div>
<div class="a" style="left:1487px;top:160px;width:13px;height:607px;background:#f3f3f3"></div>
<svg class="a" style="left:1490px;top:165px" width="8" height="6" viewBox="0 0 8 6"><path d="M1 5 L4 2 L7 5Z" fill="#a0a0a0"/></svg>
<svg class="a" style="left:1490px;top:757px" width="8" height="6" viewBox="0 0 8 6"><path d="M1 1 L4 4.5 L7 1Z" fill="#999"/></svg>
<div class="a" style="left:1260px;top:164px;width:223px;height:43px;border-radius:3px;background:#bfeedb"></div>
<svg class="a" style="left:1268px;top:179px" width="7" height="10" viewBox="0 0 7 10"><path d="M1.5 1.5 L5 5 L1.5 8.5" fill="none" stroke="#333" stroke-width="1.3"/></svg>
<svg class="a" style="left:1286px;top:177px" width="15" height="15" viewBox="0 0 15 15"><path d="M1 4 V1 H4 M11 1 H14 V4 M14 11 V14 H11 M4 14 H1 V11" fill="none" stroke="#333" stroke-width="1.2"/><rect x="4" y="4" width="4.5" height="4.5" fill="none" stroke="#333" stroke-width="1.1"/><rect x="6.5" y="6.5" width="4.5" height="4.5" fill="none" stroke="#333" stroke-width="1.1"/></svg>
<div class="t" style="left:1309px;top:179px;font-size:11.7px;color:#222">svg-01-flower-pot-new-ye...</div>
<div class="a" style="left:1256px;top:767px;width:244px;height:1px;background:#eeeeee"></div>
<div class="a" style="left:1267px;top:778px;width:16px;height:15px;border:1px solid #e4e4e4;border-radius:3px"></div>
<div class="t" style="left:1290px;top:781px;font-size:9.8px;color:#777">Background Color</div>
<div class="a" style="left:1256px;top:806px;width:244px;height:1px;background:#eeeeee"></div>
<svg class="a" style="left:1278px;top:811px" width="15" height="15" viewBox="0 0 15 15"><path d="M4 11 H1 V1 H11 V4" fill="none" stroke="#ddd" stroke-width="1.1"/><rect x="4" y="4" width="10" height="10" fill="none" stroke="#ddd" stroke-width="1.1"/><rect x="6" y="6" width="4" height="4" fill="none" stroke="#ddd" stroke-width="1"/></svg>
<div class="t" style="left:1270px;top:831px;width:30px;text-align:center;font-size:8.5px;color:#dcdcdc">Slice</div>
<svg class="a" style="left:1317px;top:810px" width="16" height="17" viewBox="0 0 16 17"><rect x="1.5" y="1.5" width="8.5" height="8.5" fill="none" stroke="#333" stroke-width="1.2"/><circle cx="9.5" cy="10.5" r="5" fill="#fff" stroke="#333" stroke-width="1.2"/><path d="M9.5 10.5 L7.5 13" stroke="#333" stroke-width="1.1"/></svg>
<svg class="a" style="left:1336px;top:816px" width="7" height="5" viewBox="0 0 7 5"><path d="M0.5 0.5 H6.5 L3.5 4Z" fill="#333"/></svg>
<div class="t" style="left:1310px;top:831px;width:38px;text-align:center;font-size:8.5px;color:#555">Combine</div>
<svg class="a" style="left:1365px;top:812px" width="17" height="11" viewBox="0 0 17 11"><path d="M6 8 H12.5 Q15 8 15 5.5 Q15 3 12.5 3 H4.5 Q1.5 3 1.5 6 Q1.5 9.5 4.5 9.5 H12.5 M12 5.5 H5.5" fill="none" stroke="#333" stroke-width="1.3"/></svg>
<div class="t" style="left:1358px;top:831px;width:30px;text-align:center;font-size:8.5px;color:#555">Attach</div>
<svg class="a" style="left:1410px;top:809px" width="16" height="16" viewBox="0 0 16 16"><path d="M8 1 V6 M6 4.2 L8 6.2 L10 4.2 M1.5 7.5 L8 11 L14.5 7.5 M1.5 11 L8 14.5 L14.5 11" fill="none" stroke="#333" stroke-width="1.3"/></svg>
<div class="t" style="left:1403px;top:831px;width:30px;text-align:center;font-size:8.5px;color:#555">Flatten</div>
<svg class="a" style="left:1454px;top:810px" width="16" height="16" viewBox="0 0 16 16"><circle cx="8" cy="8" r="6.5" fill="none" stroke="#e2e2e2" stroke-width="1.2" stroke-dasharray="2 1.5"/></svg>
<div class="t" style="left:1445px;top:831px;width:34px;text-align:center;font-size:8.5px;color:#e2e2e2">Contour</div>
<!-- TOAST / ZOOM -->
<div class="a" style="left:360px;top:799px;width:91px;height:24px;border-radius:12px;background:#f0f0f0;opacity:.85"></div>
<svg class="a" style="left:363px;top:802px" width="18" height="18" viewBox="0 0 18 18"><circle cx="9" cy="9" r="7.5" fill="none" stroke="#cfcfcf" stroke-width="1.3"/><path d="M5 9 H13" stroke="#cfcfcf" stroke-width="1.3"/></svg>
<div class="t" style="left:385px;top:803px;font-size:14.5px;color:#c9c9c9">100%</div>
<svg class="a" style="left:430px;top:802px" width="18" height="18" viewBox="0 0 18 18"><circle cx="9" cy="9" r="7.5" fill="none" stroke="#cfcfcf" stroke-width="1.3"/><path d="M5 9 H13 M9 5 V13" stroke="#cfcfcf" stroke-width="1.3"/></svg>
<div class="a" style="left:600px;top:792px;width:311px;height:43px;border-radius:7px;background:#fff;box-shadow:0 1px 4px rgba(0,0,0,.16)"></div>
<svg class="a" style="left:608px;top:805px" width="19" height="19" viewBox="0 0 19 19"><circle cx="9.5" cy="9.5" r="9.2" fill="#178c57"/><path d="M5.2 9.8 L8.2 12.6 L13.8 6.8" fill="none" stroke="#fff" stroke-width="2"/></svg>
<div class="t" style="left:634px;top:809px;font-size:11.6px;color:#555">Uploaded</div>
<svg class="a" style="left:889px;top:807px" width="14" height="14" viewBox="0 0 14 14"><path d="M1.5 1.5 L12.5 12.5 M12.5 1.5 L1.5 12.5" stroke="#333" stroke-width="1.4"/></svg>

<!--POT-->
<svg class="a" style="left:0;top:0" width="1500" height="844" viewBox="0 0 1500 844">
<line x1="512" y1="223" x2="530" y2="252" stroke="#8c8c8c" stroke-width="5.6" stroke-linecap="round"/>
<line x1="512" y1="223" x2="530" y2="252" stroke="#d4d4d4" stroke-width="4" stroke-linecap="round"/>
<polygon points="514.2,209.7 514.7,217.8 522.2,214.8 516.9,220.9 524.3,224.2 516.2,224.7 519.2,232.2 513.1,226.9 509.8,234.3 509.3,226.2 501.8,229.2 507.1,223.1 499.7,219.8 507.8,219.3 504.8,211.8 510.9,217.1" fill="#d4d4d4" stroke="#8c8c8c" stroke-width="0.8" stroke-linejoin="round"/>
<path d="M548 252 L538 205 M544 232 L531 214 M550 250 L556 204 M552 232 L568 218" stroke="#8c8c8c" stroke-width="5.4" fill="none" stroke-linecap="round"/>
<path d="M548 252 L538 205 M544 232 L531 214 M550 250 L556 204 M552 232 L568 218" stroke="#d4d4d4" stroke-width="3.6" fill="none" stroke-linecap="round"/>
<circle cx="538" cy="204" r="4.3" fill="#d4d4d4" stroke="#8c8c8c" stroke-width="0.8"/>
<circle cx="556" cy="203" r="4.3" fill="#d4d4d4" stroke="#8c8c8c" stroke-width="0.8"/>
<circle cx="531" cy="214" r="4.3" fill="#d4d4d4" stroke="#8c8c8c" stroke-width="0.8"/>
<circle cx="568" cy="217" r="4.3" fill="#d4d4d4" stroke="#8c8c8c" stroke-width="0.8"/>
<line x1="587" y1="204" x2="587" y2="250" stroke="#8c8c8c" stroke-width="6.6" stroke-linecap="round"/>
<line x1="587" y1="204" x2="587" y2="250" stroke="#d4d4d4" stroke-width="5" stroke-linecap="round"/>
<polygon points="587.0,189.5 588.7,196.3 594.4,192.2 591.3,198.5 598.3,199.0 591.9,201.9 597.0,206.8 590.2,204.8 590.9,211.8 587.0,206.0 583.1,211.8 583.8,204.8 577.0,206.8 582.1,201.9 575.7,199.0 582.7,198.5 579.6,192.2 585.3,196.3" fill="#d4d4d4" stroke="#8c8c8c" stroke-width="0.8" stroke-linejoin="round"/>
<line x1="619" y1="214" x2="619" y2="256" stroke="#8c8c8c" stroke-width="5.6" stroke-linecap="round"/>
<line x1="619" y1="214" x2="619" y2="256" stroke="#d4d4d4" stroke-width="4" stroke-linecap="round"/>
<polygon points="619.0,200.0 620.9,207.4 627.5,203.5 623.6,210.1 631.0,212.0 623.6,213.9 627.5,220.5 620.9,216.6 619.0,224.0 617.1,216.6 610.5,220.5 614.4,213.9 607.0,212.0 614.4,210.1 610.5,203.5 617.1,207.4" fill="#d4d4d4" stroke="#8c8c8c" stroke-width="0.8" stroke-linejoin="round"/>
<line x1="652" y1="212" x2="636" y2="252" stroke="#8c8c8c" stroke-width="5.6" stroke-linecap="round"/>
<line x1="652" y1="212" x2="636" y2="252" stroke="#d4d4d4" stroke-width="4" stroke-linecap="round"/>
<polygon points="655.2,197.9 655.0,206.0 662.8,203.8 657.0,209.3 664.1,213.2 656.0,213.0 658.2,220.8 652.7,215.0 648.8,222.1 649.0,214.0 641.2,216.2 647.0,210.7 639.9,206.8 648.0,207.0 645.8,199.2 651.3,205.0" fill="#d4d4d4" stroke="#8c8c8c" stroke-width="0.8" stroke-linejoin="round"/>
<polygon points="632.0,228.5 633.5,233.3 638.0,231.0 635.7,235.5 640.5,237.0 635.7,238.5 638.0,243.0 633.5,240.7 632.0,245.5 630.5,240.7 626.0,243.0 628.3,238.5 623.5,237.0 628.3,235.5 626.0,231.0 630.5,233.3" fill="#d4d4d4" stroke="#8c8c8c" stroke-width="0.8" stroke-linejoin="round"/>
<line x1="698" y1="217" x2="678" y2="252" stroke="#8c8c8c" stroke-width="5.6" stroke-linecap="round"/>
<line x1="698" y1="217" x2="678" y2="252" stroke="#d4d4d4" stroke-width="4" stroke-linecap="round"/>
<polygon points="702.3,204.3 701.4,212.3 709.3,210.7 703.0,215.8 709.7,220.3 701.7,219.4 703.3,227.3 698.2,221.0 693.7,227.7 694.6,219.7 686.7,221.3 693.0,216.2 686.3,211.7 694.3,212.6 692.7,204.7 697.8,211.0" fill="#d4d4d4" stroke="#8c8c8c" stroke-width="0.8" stroke-linejoin="round"/>
<path d="M494.0,243.0 L493.7,240.6 L493.1,238.3 L492.2,236.1 L491.1,234.1 L489.7,232.2 L488.2,230.5 L486.5,229.0 L484.6,227.8 L482.6,226.8 L480.5,226.0 L478.4,225.6 L476.2,225.3 L474.1,225.4 L472.0,225.7 L470.0,226.2 L468.1,227.0 L466.3,228.0 L464.6,229.2 L463.1,230.6 L461.9,232.1 L460.8,233.7 L459.9,235.5 L459.3,237.3 L458.9,239.1 L458.7,241.0 L458.8,242.8 L459.0,244.7 L459.5,246.4 L460.2,248.0 L461.1,249.6 L462.1,251.0 L463.3,252.2 L464.6,253.3 L466.0,254.2 L467.5,254.9 L469.1,255.5 L470.6,255.8 L472.2,255.9 L473.8,255.8 L475.3,255.6 L476.8,255.2 L478.2,254.6 L479.4,253.8 L480.6,252.9 L481.6,251.9 L482.5,250.8 L483.2,249.6 L483.8,248.4 L484.2,247.1 L484.5,245.8 L484.5,244.5 L484.5,243.2 L484.2,242.0 L483.9,240.8 L483.3,239.7 L482.7,238.7 L482.0,237.8 L481.2,237.0 L480.3,236.3 L479.3,235.7" fill="none" stroke="#98a34a" stroke-width="7.8" stroke-linecap="round"/>
<path d="M494.0,243.0 L493.7,240.6 L493.1,238.3 L492.2,236.1 L491.1,234.1 L489.7,232.2 L488.2,230.5 L486.5,229.0 L484.6,227.8 L482.6,226.8 L480.5,226.0 L478.4,225.6 L476.2,225.3 L474.1,225.4 L472.0,225.7 L470.0,226.2 L468.1,227.0 L466.3,228.0 L464.6,229.2 L463.1,230.6 L461.9,232.1 L460.8,233.7 L459.9,235.5 L459.3,237.3 L458.9,239.1 L458.7,241.0 L458.8,242.8 L459.0,244.7 L459.5,246.4 L460.2,248.0 L461.1,249.6 L462.1,251.0 L463.3,252.2 L464.6,253.3 L466.0,254.2 L467.5,254.9 L469.1,255.5 L470.6,255.8 L472.2,255.9 L473.8,255.8 L475.3,255.6 L476.8,255.2 L478.2,254.6 L479.4,253.8 L480.6,252.9 L481.6,251.9 L482.5,250.8 L483.2,249.6 L483.8,248.4 L484.2,247.1 L484.5,245.8 L484.5,244.5 L484.5,243.2 L484.2,242.0 L483.9,240.8 L483.3,239.7 L482.7,238.7 L482.0,237.8 L481.2,237.0 L480.3,236.3 L479.3,235.7" fill="none" stroke="#d7ee78" stroke-width="6" stroke-linecap="round"/>
<circle cx="475.6" cy="244.6" r="8.4" fill="#d7ee78" stroke="#98a34a" stroke-width="0.8"/>
<path d="M638.0,233.0 L638.3,230.6 L638.9,228.3 L639.8,226.1 L640.9,224.1 L642.3,222.2 L643.8,220.5 L645.5,219.0 L647.4,217.8 L649.4,216.8 L651.5,216.0 L653.6,215.6 L655.8,215.3 L657.9,215.4 L660.0,215.7 L662.0,216.2 L663.9,217.0 L665.7,218.0 L667.4,219.2 L668.9,220.6 L670.1,222.1 L671.2,223.7 L672.1,225.5 L672.7,227.3 L673.1,229.1 L673.3,231.0 L673.2,232.8 L673.0,234.7 L672.5,236.4 L671.8,238.0 L670.9,239.6 L669.9,241.0 L668.7,242.2 L667.4,243.3 L666.0,244.2 L664.5,244.9 L662.9,245.5 L661.4,245.8 L659.8,245.9 L658.2,245.8 L656.7,245.6 L655.2,245.2 L653.8,244.6 L652.6,243.8 L651.4,242.9 L650.4,241.9 L649.5,240.8 L648.8,239.6 L648.2,238.4 L647.8,237.1 L647.5,235.8 L647.5,234.5 L647.5,233.2 L647.8,232.0 L648.1,230.8 L648.7,229.7 L649.3,228.7 L650.0,227.8 L650.8,227.0 L651.7,226.3 L652.7,225.7" fill="none" stroke="#98a34a" stroke-width="7.8" stroke-linecap="round"/>
<path d="M638.0,233.0 L638.3,230.6 L638.9,228.3 L639.8,226.1 L640.9,224.1 L642.3,222.2 L643.8,220.5 L645.5,219.0 L647.4,217.8 L649.4,216.8 L651.5,216.0 L653.6,215.6 L655.8,215.3 L657.9,215.4 L660.0,215.7 L662.0,216.2 L663.9,217.0 L665.7,218.0 L667.4,219.2 L668.9,220.6 L670.1,222.1 L671.2,223.7 L672.1,225.5 L672.7,227.3 L673.1,229.1 L673.3,231.0 L673.2,232.8 L673.0,234.7 L672.5,236.4 L671.8,238.0 L670.9,239.6 L669.9,241.0 L668.7,242.2 L667.4,243.3 L666.0,244.2 L664.5,244.9 L662.9,245.5 L661.4,245.8 L659.8,245.9 L658.2,245.8 L656.7,245.6 L655.2,245.2 L653.8,244.6 L652.6,243.8 L651.4,242.9 L650.4,241.9 L649.5,240.8 L648.8,239.6 L648.2,238.4 L647.8,237.1 L647.5,235.8 L647.5,234.5 L647.5,233.2 L647.8,232.0 L648.1,230.8 L648.7,229.7 L649.3,228.7 L650.0,227.8 L650.8,227.0 L651.7,226.3 L652.7,225.7" fill="none" stroke="#d7ee78" stroke-width="6" stroke-linecap="round"/>
<circle cx="659.6" cy="234.6" r="8.4" fill="#d7ee78" stroke="#98a34a" stroke-width="0.8"/>
<path d="M512 345 Q540 305 600 305 Q675 305 695 345 L685 395 L520 395 Z" fill="#96ca40" stroke="#6b8a2a" stroke-width="0.8"/>
<line x1="520" y1="305" x2="550" y2="385" stroke="#5c7a22" stroke-width="11.2"/>
<line x1="520" y1="305" x2="550" y2="385" stroke="#4aa81c" stroke-width="10"/>
<line x1="540" y1="305" x2="562" y2="382" stroke="#5c7a22" stroke-width="7.2"/>
<line x1="540" y1="305" x2="562" y2="382" stroke="#e2f292" stroke-width="6"/>
<line x1="598" y1="310" x2="588" y2="382" stroke="#5c7a22" stroke-width="13.2"/>
<line x1="598" y1="310" x2="588" y2="382" stroke="#4aa81c" stroke-width="12"/>
<line x1="575" y1="320" x2="578" y2="385" stroke="#5c7a22" stroke-width="7.2"/>
<line x1="575" y1="320" x2="578" y2="385" stroke="#e2f292" stroke-width="6"/>
<line x1="645" y1="318" x2="620" y2="385" stroke="#5c7a22" stroke-width="8.2"/>
<line x1="645" y1="318" x2="620" y2="385" stroke="#e2f292" stroke-width="7"/>
<line x1="668" y1="322" x2="642" y2="385" stroke="#5c7a22" stroke-width="11.2"/>
<line x1="668" y1="322" x2="642" y2="385" stroke="#4aa81c" stroke-width="10"/>
<line x1="690" y1="335" x2="662" y2="385" stroke="#5c7a22" stroke-width="9.2"/>
<line x1="690" y1="335" x2="662" y2="385" stroke="#b8dd5a" stroke-width="8"/>
<line x1="612" y1="315" x2="606" y2="385" stroke="#5c7a22" stroke-width="9.2"/>
<line x1="612" y1="315" x2="606" y2="385" stroke="#4aa81c" stroke-width="8"/>
<path d="M506.1,370.0 L504.4,367.9 L502.6,366.1 L500.6,364.4 L498.4,363.1 L496.0,362.1 L493.6,361.3 L491.2,360.8 L488.7,360.7 L486.3,360.8 L483.9,361.3 L481.6,362.0 L479.4,362.9 L477.4,364.2 L475.6,365.6 L473.9,367.2 L472.5,369.0 L471.4,371.0 L470.5,373.0 L469.8,375.1 L469.4,377.3 L469.3,379.4 L469.4,381.6 L469.8,383.6 L470.5,385.6 L471.3,387.5 L472.4,389.2 L473.7,390.8 L475.1,392.2 L476.6,393.4 L478.3,394.4 L480.1,395.1 L481.9,395.7 L483.7,396.0 L485.6,396.1 L487.4,395.9 L489.2,395.6 L490.8,395.0 L492.4,394.3 L493.9,393.4 L495.2,392.3 L496.3,391.1 L497.3,389.7 L498.1,388.3 L498.8,386.8 L499.2,385.3 L499.4,383.8 L499.5,382.2 L499.3,380.7 L499.0,379.3 L498.5,377.9 L497.9,376.6 L497.1,375.5 L496.2,374.4 L495.2,373.5 L494.1,372.7 L492.9,372.1 L491.7,371.6 L490.5,371.3 L489.3,371.2 L488.0,371.2" fill="none" stroke="#98a34a" stroke-width="7.8" stroke-linecap="round"/>
<path d="M506.1,370.0 L504.4,367.9 L502.6,366.1 L500.6,364.4 L498.4,363.1 L496.0,362.1 L493.6,361.3 L491.2,360.8 L488.7,360.7 L486.3,360.8 L483.9,361.3 L481.6,362.0 L479.4,362.9 L477.4,364.2 L475.6,365.6 L473.9,367.2 L472.5,369.0 L471.4,371.0 L470.5,373.0 L469.8,375.1 L469.4,377.3 L469.3,379.4 L469.4,381.6 L469.8,383.6 L470.5,385.6 L471.3,387.5 L472.4,389.2 L473.7,390.8 L475.1,392.2 L476.6,393.4 L478.3,394.4 L480.1,395.1 L481.9,395.7 L483.7,396.0 L485.6,396.1 L487.4,395.9 L489.2,395.6 L490.8,395.0 L492.4,394.3 L493.9,393.4 L495.2,392.3 L496.3,391.1 L497.3,389.7 L498.1,388.3 L498.8,386.8 L499.2,385.3 L499.4,383.8 L499.5,382.2 L499.3,380.7 L499.0,379.3 L498.5,377.9 L497.9,376.6 L497.1,375.5 L496.2,374.4 L495.2,373.5 L494.1,372.7 L492.9,372.1 L491.7,371.6 L490.5,371.3 L489.3,371.2 L488.0,371.2" fill="none" stroke="#d7ee78" stroke-width="6" stroke-linecap="round"/>
<circle cx="488.8" cy="382.8" r="9.2" fill="#d7ee78" stroke="#98a34a" stroke-width="0.8"/>
<path d="M694.3,349.5 L695.6,347.1 L697.1,345.0 L698.8,343.0 L700.7,341.3 L702.8,339.9 L705.0,338.7 L707.4,337.9 L709.8,337.3 L712.2,337.0 L714.7,337.0 L717.0,337.3 L719.3,337.9 L721.5,338.8 L723.6,339.9 L725.5,341.2 L727.2,342.7 L728.6,344.4 L729.9,346.3 L730.9,348.2 L731.7,350.3 L732.2,352.4 L732.4,354.5 L732.4,356.6 L732.1,358.7 L731.6,360.7 L730.8,362.6 L729.8,364.3 L728.7,366.0 L727.4,367.4 L725.9,368.7 L724.3,369.7 L722.6,370.6 L720.8,371.2 L719.0,371.6 L717.2,371.8 L715.4,371.7 L713.7,371.5 L712.0,371.0 L710.4,370.4 L708.9,369.5 L707.5,368.5 L706.3,367.4 L705.3,366.1 L704.4,364.8 L703.8,363.4 L703.3,361.9 L702.9,360.4 L702.8,358.9 L702.9,357.4 L703.1,356.0 L703.5,354.6 L704.1,353.3 L704.8,352.1 L705.6,351.0 L706.6,350.1 L707.6,349.2 L708.7,348.6 L709.9,348.1 L711.1,347.7 L712.3,347.5" fill="none" stroke="#98a34a" stroke-width="7.8" stroke-linecap="round"/>
<path d="M694.3,349.5 L695.6,347.1 L697.1,345.0 L698.8,343.0 L700.7,341.3 L702.8,339.9 L705.0,338.7 L707.4,337.9 L709.8,337.3 L712.2,337.0 L714.7,337.0 L717.0,337.3 L719.3,337.9 L721.5,338.8 L723.6,339.9 L725.5,341.2 L727.2,342.7 L728.6,344.4 L729.9,346.3 L730.9,348.2 L731.7,350.3 L732.2,352.4 L732.4,354.5 L732.4,356.6 L732.1,358.7 L731.6,360.7 L730.8,362.6 L729.8,364.3 L728.7,366.0 L727.4,367.4 L725.9,368.7 L724.3,369.7 L722.6,370.6 L720.8,371.2 L719.0,371.6 L717.2,371.8 L715.4,371.7 L713.7,371.5 L712.0,371.0 L710.4,370.4 L708.9,369.5 L707.5,368.5 L706.3,367.4 L705.3,366.1 L704.4,364.8 L703.8,363.4 L703.3,361.9 L702.9,360.4 L702.8,358.9 L702.9,357.4 L703.1,356.0 L703.5,354.6 L704.1,353.3 L704.8,352.1 L705.6,351.0 L706.6,350.1 L707.6,349.2 L708.7,348.6 L709.9,348.1 L711.1,347.7 L712.3,347.5" fill="none" stroke="#d7ee78" stroke-width="6" stroke-linecap="round"/>
<circle cx="716.8" cy="358.8" r="9.2" fill="#d7ee78" stroke="#98a34a" stroke-width="0.8"/>
<path transform="translate(484,300) rotate(12.0)" d="M-6.0,-13.200000000000001 C-7.500000000000002,-29.7 -22.2,-59.4 -9.0,-64.67999999999999 Q0,-67.98 9.0,-64.67999999999999 C22.2,-59.4 7.500000000000002,-29.7 6.0,-13.200000000000001 Z" fill="#f9d70f" stroke="#a08a12" stroke-width="0.9"/>
<path transform="translate(484,300) rotate(55.0)" d="M-6.0,-12.0 C-7.000000000000002,-27.0 -20.72,-54.0 -8.4,-58.8 Q0,-61.800000000000004 8.4,-58.8 C20.72,-54.0 7.000000000000002,-27.0 6.0,-12.0 Z" fill="#f9d70f" stroke="#a08a12" stroke-width="0.9"/>
<path transform="translate(484,300) rotate(95.0)" d="M-6.0,-11.600000000000001 C-7.000000000000002,-26.1 -20.72,-52.2 -8.4,-56.839999999999996 Q0,-59.74 8.4,-56.839999999999996 C20.72,-52.2 7.000000000000002,-26.1 6.0,-11.600000000000001 Z" fill="#f9d70f" stroke="#a08a12" stroke-width="0.9"/>
<path transform="translate(484,300) rotate(126.0)" d="M-6.0,-12.8 C-7.500000000000002,-28.8 -22.2,-57.6 -9.0,-62.72 Q0,-65.92 9.0,-62.72 C22.2,-57.6 7.500000000000002,-28.8 6.0,-12.8 Z" fill="#f9d70f" stroke="#a08a12" stroke-width="0.9"/>
<path transform="translate(484,300) rotate(166.0)" d="M-6.0,-12.600000000000001 C-7.500000000000002,-28.35 -22.2,-56.7 -9.0,-61.74 Q0,-64.89 9.0,-61.74 C22.2,-56.7 7.500000000000002,-28.35 6.0,-12.600000000000001 Z" fill="#f9d70f" stroke="#a08a12" stroke-width="0.9"/>
<path transform="translate(484,300) rotate(205.0)" d="M-6.0,-13.0 C-7.500000000000002,-29.25 -22.2,-58.5 -9.0,-63.699999999999996 Q0,-66.95 9.0,-63.699999999999996 C22.2,-58.5 7.500000000000002,-29.25 6.0,-13.0 Z" fill="#f9d70f" stroke="#a08a12" stroke-width="0.9"/>
<path transform="translate(484,300) rotate(240.0)" d="M-6.0,-11.600000000000001 C-7.000000000000002,-26.1 -20.72,-52.2 -8.4,-56.839999999999996 Q0,-59.74 8.4,-56.839999999999996 C20.72,-52.2 7.000000000000002,-26.1 6.0,-11.600000000000001 Z" fill="#f9d70f" stroke="#a08a12" stroke-width="0.9"/>
<path transform="translate(484,300) rotate(282.0)" d="M-6.0,-11.0 C-7.000000000000002,-24.75 -20.72,-49.5 -8.4,-53.9 Q0,-56.65 8.4,-53.9 C20.72,-49.5 7.000000000000002,-24.75 6.0,-11.0 Z" fill="#f9d70f" stroke="#a08a12" stroke-width="0.9"/>
<path transform="translate(484,300) rotate(315.0)" d="M-6.0,-11.200000000000001 C-7.000000000000002,-25.2 -20.72,-50.4 -8.4,-54.879999999999995 Q0,-57.68 8.4,-54.879999999999995 C20.72,-50.4 7.000000000000002,-25.2 6.0,-11.200000000000001 Z" fill="#f9d70f" stroke="#a08a12" stroke-width="0.9"/>
<circle cx="484.3" cy="299.8" r="25" fill="#d8aa0c" stroke="#a8850c" stroke-width="1"/>
<g transform="translate(485.5,299.5) scale(1.42,1.14)"><text x="0" y="13.7" text-anchor="middle" font-family="Liberation Sans" font-weight="bold" font-size="38" fill="#7a7a7a" stroke="#6e6e6e" stroke-width="4.6" stroke-linejoin="round">2</text>
<text x="0" y="13.7" text-anchor="middle" font-family="Liberation Sans" font-weight="bold" font-size="38" fill="#d9d9d9" stroke="#d9d9d9" stroke-width="2.8" stroke-linejoin="round">2</text></g>
<path transform="translate(704.4,292.8) rotate(-41.0)" d="M-6.0,-11.4 C-6.650000000000001,-25.650000000000002 -19.683999999999997,-51.300000000000004 -7.979999999999999,-55.86 Q0,-58.71 7.979999999999999,-55.86 C19.683999999999997,-51.300000000000004 6.650000000000001,-25.650000000000002 6.0,-11.4 Z" fill="#e20fc7" stroke="#9e0a8c" stroke-width="0.9"/>
<path transform="translate(704.4,292.8) rotate(-3.0)" d="M-6.0,-12.200000000000001 C-7.125000000000002,-27.45 -21.09,-54.9 -8.549999999999999,-59.78 Q0,-62.83 8.549999999999999,-59.78 C21.09,-54.9 7.125000000000002,-27.45 6.0,-12.200000000000001 Z" fill="#e20fc7" stroke="#9e0a8c" stroke-width="0.9"/>
<path transform="translate(704.4,292.8) rotate(47.0)" d="M-6.0,-10.4 C-6.650000000000001,-23.400000000000002 -19.683999999999997,-46.800000000000004 -7.979999999999999,-50.96 Q0,-53.56 7.979999999999999,-50.96 C19.683999999999997,-46.800000000000004 6.650000000000001,-23.400000000000002 6.0,-10.4 Z" fill="#e20fc7" stroke="#9e0a8c" stroke-width="0.9"/>
<path transform="translate(704.4,292.8) rotate(88.0)" d="M-6.0,-10.200000000000001 C-6.175000000000002,-22.95 -18.278,-45.9 -7.409999999999999,-49.98 Q0,-52.53 7.409999999999999,-49.98 C18.278,-45.9 6.175000000000002,-22.95 6.0,-10.200000000000001 Z" fill="#e20fc7" stroke="#9e0a8c" stroke-width="0.9"/>
<path transform="translate(704.4,292.8) rotate(128.0)" d="M-6.0,-11.200000000000001 C-6.650000000000001,-25.2 -19.683999999999997,-50.4 -7.979999999999999,-54.879999999999995 Q0,-57.68 7.979999999999999,-54.879999999999995 C19.683999999999997,-50.4 6.650000000000001,-25.2 6.0,-11.200000000000001 Z" fill="#e20fc7" stroke="#9e0a8c" stroke-width="0.9"/>
<path transform="translate(704.4,292.8) rotate(166.0)" d="M-6.0,-12.200000000000001 C-7.125000000000002,-27.45 -21.09,-54.9 -8.549999999999999,-59.78 Q0,-62.83 8.549999999999999,-59.78 C21.09,-54.9 7.125000000000002,-27.45 6.0,-12.200000000000001 Z" fill="#e20fc7" stroke="#9e0a8c" stroke-width="0.9"/>
<path transform="translate(704.4,292.8) rotate(208.0)" d="M-6.0,-12.0 C-7.125000000000002,-27.0 -21.09,-54.0 -8.549999999999999,-58.8 Q0,-61.800000000000004 8.549999999999999,-58.8 C21.09,-54.0 7.125000000000002,-27.0 6.0,-12.0 Z" fill="#e20fc7" stroke="#9e0a8c" stroke-width="0.9"/>
<path transform="translate(704.4,292.8) rotate(250.0)" d="M-6.0,-11.200000000000001 C-6.650000000000001,-25.2 -19.683999999999997,-50.4 -7.979999999999999,-54.879999999999995 Q0,-57.68 7.979999999999999,-54.879999999999995 C19.683999999999997,-50.4 6.650000000000001,-25.2 6.0,-11.200000000000001 Z" fill="#e20fc7" stroke="#9e0a8c" stroke-width="0.9"/>
<path transform="translate(704.4,292.8) rotate(290.0)" d="M-6.0,-11.200000000000001 C-6.650000000000001,-25.2 -19.683999999999997,-50.4 -7.979999999999999,-54.879999999999995 Q0,-57.68 7.979999999999999,-54.879999999999995 C19.683999999999997,-50.4 6.650000000000001,-25.2 6.0,-11.200000000000001 Z" fill="#e20fc7" stroke="#9e0a8c" stroke-width="0.9"/>
<ellipse cx="704.4" cy="292.8" rx="22" ry="25" fill="#e98ee2" stroke="#b540a8" stroke-width="1"/>
<g transform="translate(705,293.3) scale(1.42,1.14)"><text x="0" y="14.0" text-anchor="middle" font-family="Liberation Sans" font-weight="bold" font-size="39" fill="#7a7a7a" stroke="#6e6e6e" stroke-width="4.6" stroke-linejoin="round">6</text>
<text x="0" y="14.0" text-anchor="middle" font-family="Liberation Sans" font-weight="bold" font-size="39" fill="#d9d9d9" stroke="#d9d9d9" stroke-width="2.8" stroke-linejoin="round">6</text></g>
<path transform="translate(620.5,298) rotate(-11.0)" d="M-5.0,-12.200000000000001 C-9.350000000000001,-27.45 -10.54,-54.9 -5.1,-59.78 Q0,-62.83 5.1,-59.78 C10.54,-54.9 9.350000000000001,-27.45 5.0,-12.200000000000001 Z" fill="#6a0a9e" stroke="#4a0a6e" stroke-width="0.9"/>
<path transform="translate(620.5,298) rotate(15.0)" d="M-5.0,-12.200000000000001 C-9.350000000000001,-27.45 -10.54,-54.9 -5.1,-59.78 Q0,-62.83 5.1,-59.78 C10.54,-54.9 9.350000000000001,-27.45 5.0,-12.200000000000001 Z" fill="#6a0a9e" stroke="#4a0a6e" stroke-width="0.9"/>
<path transform="translate(620.5,298) rotate(45.0)" d="M-5.0,-12.200000000000001 C-9.350000000000001,-27.45 -10.54,-54.9 -5.1,-59.78 Q0,-62.83 5.1,-59.78 C10.54,-54.9 9.350000000000001,-27.45 5.0,-12.200000000000001 Z" fill="#6a0a9e" stroke="#4a0a6e" stroke-width="0.9"/>
<path transform="translate(620.5,298) rotate(75.0)" d="M-5.0,-12.200000000000001 C-9.350000000000001,-27.45 -10.54,-54.9 -5.1,-59.78 Q0,-62.83 5.1,-59.78 C10.54,-54.9 9.350000000000001,-27.45 5.0,-12.200000000000001 Z" fill="#6a0a9e" stroke="#4a0a6e" stroke-width="0.9"/>
<path transform="translate(620.5,298) rotate(103.0)" d="M-5.0,-12.200000000000001 C-9.350000000000001,-27.45 -10.54,-54.9 -5.1,-59.78 Q0,-62.83 5.1,-59.78 C10.54,-54.9 9.350000000000001,-27.45 5.0,-12.200000000000001 Z" fill="#6a0a9e" stroke="#4a0a6e" stroke-width="0.9"/>
<path transform="translate(620.5,298) rotate(135.0)" d="M-5.0,-12.200000000000001 C-9.350000000000001,-27.45 -10.54,-54.9 -5.1,-59.78 Q0,-62.83 5.1,-59.78 C10.54,-54.9 9.350000000000001,-27.45 5.0,-12.200000000000001 Z" fill="#6a0a9e" stroke="#4a0a6e" stroke-width="0.9"/>
<path transform="translate(620.5,298) rotate(165.0)" d="M-5.0,-12.200000000000001 C-9.350000000000001,-27.45 -10.54,-54.9 -5.1,-59.78 Q0,-62.83 5.1,-59.78 C10.54,-54.9 9.350000000000001,-27.45 5.0,-12.200000000000001 Z" fill="#6a0a9e" stroke="#4a0a6e" stroke-width="0.9"/>
<path transform="translate(620.5,298) rotate(195.0)" d="M-5.0,-12.200000000000001 C-9.350000000000001,-27.45 -10.54,-54.9 -5.1,-59.78 Q0,-62.83 5.1,-59.78 C10.54,-54.9 9.350000000000001,-27.45 5.0,-12.200000000000001 Z" fill="#6a0a9e" stroke="#4a0a6e" stroke-width="0.9"/>
<path transform="translate(620.5,298) rotate(225.0)" d="M-5.0,-12.200000000000001 C-9.350000000000001,-27.45 -10.54,-54.9 -5.1,-59.78 Q0,-62.83 5.1,-59.78 C10.54,-54.9 9.350000000000001,-27.45 5.0,-12.200000000000001 Z" fill="#6a0a9e" stroke="#4a0a6e" stroke-width="0.9"/>
<path transform="translate(620.5,298) rotate(255.0)" d="M-5.0,-12.200000000000001 C-9.350000000000001,-27.45 -10.54,-54.9 -5.1,-59.78 Q0,-62.83 5.1,-59.78 C10.54,-54.9 9.350000000000001,-27.45 5.0,-12.200000000000001 Z" fill="#6a0a9e" stroke="#4a0a6e" stroke-width="0.9"/>
<path transform="translate(620.5,298) rotate(285.0)" d="M-5.0,-12.200000000000001 C-9.350000000000001,-27.45 -10.54,-54.9 -5.1,-59.78 Q0,-62.83 5.1,-59.78 C10.54,-54.9 9.350000000000001,-27.45 5.0,-12.200000000000001 Z" fill="#6a0a9e" stroke="#4a0a6e" stroke-width="0.9"/>
<path transform="translate(620.5,298) rotate(315.0)" d="M-5.0,-12.200000000000001 C-9.350000000000001,-27.45 -10.54,-54.9 -5.1,-59.78 Q0,-62.83 5.1,-59.78 C10.54,-54.9 9.350000000000001,-27.45 5.0,-12.200000000000001 Z" fill="#6a0a9e" stroke="#4a0a6e" stroke-width="0.9"/>
<circle cx="620.5" cy="298" r="23" fill="#b068d8" stroke="#7c2fa8" stroke-width="1"/>
<g transform="translate(620,298) scale(1.42,1.14)"><text x="0" y="13.3" text-anchor="middle" font-family="Liberation Sans" font-weight="bold" font-size="37" fill="#7a7a7a" stroke="#6e6e6e" stroke-width="4.6" stroke-linejoin="round">2</text>
<text x="0" y="13.3" text-anchor="middle" font-family="Liberation Sans" font-weight="bold" font-size="37" fill="#d9d9d9" stroke="#d9d9d9" stroke-width="2.8" stroke-linejoin="round">2</text></g>
<path d="M544.2,242.6 Q545.7,228.9 551.6,224.7 Q557.5,228.9 559.0,242.6 Q566.8,231.2 573.9,230.2 Q577.1,236.7 572.2,249.5 Q584.3,243.0 591.1,245.4 Q590.9,252.7 580.6,261.7 Q594.3,261.6 599.3,266.9 Q595.8,273.2 582.4,276.4 Q594.6,282.7 596.5,289.7 Q590.5,293.7 577.1,290.3 Q585.0,301.6 583.4,308.6 Q576.2,309.3 566.0,300.1 Q567.8,313.8 563.1,319.3 Q556.4,316.6 551.6,303.7 Q546.8,316.6 540.1,319.3 Q535.4,313.8 537.2,300.1 Q527.0,309.3 519.8,308.6 Q518.2,301.6 526.1,290.3 Q512.7,293.7 506.7,289.7 Q508.6,282.7 520.8,276.4 Q507.4,273.2 503.9,266.9 Q508.9,261.6 522.6,261.7 Q512.3,252.7 512.1,245.4 Q518.9,243.0 531.0,249.5 Q526.1,236.7 529.3,230.2 Q536.4,231.2 544.2,242.6 Z" fill="#1ab4e6" stroke="#0d78a8" stroke-width="1" stroke-linejoin="round"/>
<circle cx="551.6" cy="272.7" r="25" fill="#1b78c4" stroke="#0e5a98" stroke-width="1"/>
<ellipse cx="551.6" cy="272.7" rx="10.5" ry="14" fill="none" stroke="#6e6e6e" stroke-width="11.5"/>
<ellipse cx="551.6" cy="272.7" rx="10.5" ry="14" fill="none" stroke="#d9d9d9" stroke-width="9.5"/>
<path d="M554.4 361 L578.5 357 Q580 370 580 384 Q570 387 558.6 385.3 Q555 372 554.4 361 Z" fill="#e010c4" stroke="#9e0a8c" stroke-width="0.9"/>
<path d="M555.5 367 L579 362.5 L579.5 368 L556.5 373 Z M557 378 L580 373 L580 378.5 L557.8 383 Z" fill="#e89ae2"/>
<path d="M557.2 324.2 L581.4 351.2 Q566 358 547.2 359.7 Z" fill="#e010c4" stroke="#9e0a8c" stroke-width="0.9" stroke-linejoin="round"/>
<path d="M509 387 Q594 383 678 386 Q683 388 681 395 L680 406 Q679 410 674 410 L512 410 Q507 410 506 405 L505 395 Q505 388 509 387 Z" fill="#173d61" stroke="#0e2a46" stroke-width="1"/>
<path d="M520 410 L673 410 C672 455 662 500 641 519 Q597 532 554 519 C532 500 521 455 520 410 Z" fill="#173d61" stroke="#0e2a46" stroke-width="1"/>
<line x1="512" y1="410.5" x2="675" y2="410.5" stroke="#0e2a46" stroke-width="1.2"/>
<circle cx="521.1" cy="372.6" r="7.5" fill="#1b74c6" stroke="#0d4f90" stroke-width="0.8"/>
<circle cx="527.9" cy="382.0" r="7.5" fill="#1b74c6" stroke="#0d4f90" stroke-width="0.8"/>
<circle cx="521.1" cy="391.4" r="7.5" fill="#1b74c6" stroke="#0d4f90" stroke-width="0.8"/>
<circle cx="510.0" cy="387.8" r="7.5" fill="#1b74c6" stroke="#0d4f90" stroke-width="0.8"/>
<circle cx="510.0" cy="376.2" r="7.5" fill="#1b74c6" stroke="#0d4f90" stroke-width="0.8"/>
<circle cx="518" cy="382" r="8.1" fill="#1b74c6"/>
<circle cx="518" cy="382" r="3.6" fill="#d8d8d8" stroke="#888" stroke-width="0.6"/>
<circle cx="657.7" cy="371.6" r="6.5" fill="#1ab4ea" stroke="#0c7fb0" stroke-width="0.8"/>
<circle cx="663.8" cy="380.0" r="6.5" fill="#1ab4ea" stroke="#0c7fb0" stroke-width="0.8"/>
<circle cx="657.7" cy="388.4" r="6.5" fill="#1ab4ea" stroke="#0c7fb0" stroke-width="0.8"/>
<circle cx="647.9" cy="385.2" r="6.5" fill="#1ab4ea" stroke="#0c7fb0" stroke-width="0.8"/>
<circle cx="647.9" cy="374.8" r="6.5" fill="#1ab4ea" stroke="#0c7fb0" stroke-width="0.8"/>
<circle cx="655" cy="380" r="7.2" fill="#1ab4ea"/>
<circle cx="655" cy="380" r="3.6" fill="#d8d8d8" stroke="#888" stroke-width="0.6"/>
<circle cx="684.9" cy="383.1" r="7" fill="#1ab4ea" stroke="#0c7fb0" stroke-width="0.8"/>
<circle cx="691.4" cy="392.0" r="7" fill="#1ab4ea" stroke="#0c7fb0" stroke-width="0.8"/>
<circle cx="684.9" cy="400.9" r="7" fill="#1ab4ea" stroke="#0c7fb0" stroke-width="0.8"/>
<circle cx="674.4" cy="397.5" r="7" fill="#1ab4ea" stroke="#0c7fb0" stroke-width="0.8"/>
<circle cx="674.4" cy="386.5" r="7" fill="#1ab4ea" stroke="#0c7fb0" stroke-width="0.8"/>
<circle cx="682" cy="392" r="7.65" fill="#1ab4ea"/>
<circle cx="682" cy="392" r="3.6" fill="#d8d8d8" stroke="#888" stroke-width="0.6"/>
<path transform="translate(598,385) rotate(0.0)" d="M-2.0,-4.0 C-5.5,-9.0 -6.2,-18.0 -3.0,-19.6 Q0,-20.6 3.0,-19.6 C6.2,-18.0 5.5,-9.0 2.0,-4.0 Z" fill="#6a12a0" stroke="#4a0a70" stroke-width="0.7"/>
<path transform="translate(598,385) rotate(45.0)" d="M-2.0,-4.0 C-5.5,-9.0 -6.2,-18.0 -3.0,-19.6 Q0,-20.6 3.0,-19.6 C6.2,-18.0 5.5,-9.0 2.0,-4.0 Z" fill="#6a12a0" stroke="#4a0a70" stroke-width="0.7"/>
<path transform="translate(598,385) rotate(90.0)" d="M-2.0,-4.0 C-5.5,-9.0 -6.2,-18.0 -3.0,-19.6 Q0,-20.6 3.0,-19.6 C6.2,-18.0 5.5,-9.0 2.0,-4.0 Z" fill="#6a12a0" stroke="#4a0a70" stroke-width="0.7"/>
<path transform="translate(598,385) rotate(135.0)" d="M-2.0,-4.0 C-5.5,-9.0 -6.2,-18.0 -3.0,-19.6 Q0,-20.6 3.0,-19.6 C6.2,-18.0 5.5,-9.0 2.0,-4.0 Z" fill="#6a12a0" stroke="#4a0a70" stroke-width="0.7"/>
<path transform="translate(598,385) rotate(180.0)" d="M-2.0,-4.0 C-5.5,-9.0 -6.2,-18.0 -3.0,-19.6 Q0,-20.6 3.0,-19.6 C6.2,-18.0 5.5,-9.0 2.0,-4.0 Z" fill="#6a12a0" stroke="#4a0a70" stroke-width="0.7"/>
<path transform="translate(598,385) rotate(225.0)" d="M-2.0,-4.0 C-5.5,-9.0 -6.2,-18.0 -3.0,-19.6 Q0,-20.6 3.0,-19.6 C6.2,-18.0 5.5,-9.0 2.0,-4.0 Z" fill="#6a12a0" stroke="#4a0a70" stroke-width="0.7"/>
<path transform="translate(598,385) rotate(270.0)" d="M-2.0,-4.0 C-5.5,-9.0 -6.2,-18.0 -3.0,-19.6 Q0,-20.6 3.0,-19.6 C6.2,-18.0 5.5,-9.0 2.0,-4.0 Z" fill="#6a12a0" stroke="#4a0a70" stroke-width="0.7"/>
<path transform="translate(598,385) rotate(315.0)" d="M-2.0,-4.0 C-5.5,-9.0 -6.2,-18.0 -3.0,-19.6 Q0,-20.6 3.0,-19.6 C6.2,-18.0 5.5,-9.0 2.0,-4.0 Z" fill="#6a12a0" stroke="#4a0a70" stroke-width="0.7"/>
<circle cx="598" cy="385" r="4" fill="#d8d8d8" stroke="#777" stroke-width="0.6"/>
<polygon points="551.0,374.0 553.9,381.0 561.5,381.6 555.8,386.5 557.5,393.9 551.0,390.0 544.5,393.9 546.2,386.5 540.5,381.6 548.1,381.0" fill="#f6d90f" stroke="#a89012" stroke-width="0.8" stroke-linejoin="round"/>
<polygon points="629.0,374.0 631.9,381.0 639.5,381.6 633.8,386.5 635.5,393.9 629.0,390.0 622.5,393.9 624.2,386.5 618.5,381.6 626.1,381.0" fill="#f6d90f" stroke="#a89012" stroke-width="0.8" stroke-linejoin="round"/>
<path transform="translate(599.2,460.6) rotate(-50.3)" d="M0,0 Q20.824913265125513,-3.6 37.649826530251026,-4.0 A4.0,4.0 0 0 1 37.649826530251026,4.0 Q20.824913265125513,3.6 0,0 Z" fill="#e312c6"/>
<path transform="translate(590.9,462.3) rotate(-131.8)" d="M0,0 Q15.169583052938545,-3.6 26.33916610587709,-4.0 A4.0,4.0 0 0 1 26.33916610587709,4.0 Q15.169583052938545,3.6 0,0 Z" fill="#e312c6"/>
<path transform="translate(588.4,465.6) rotate(-173.5)" d="M0,0 Q17.323168914779977,-3.6 30.646337829559954,-4.0 A4.0,4.0 0 0 1 30.646337829559954,4.0 Q17.323168914779977,3.6 0,0 Z" fill="#e312c6"/>
<path transform="translate(601.9,467.1) rotate(6.3)" d="M0,0 Q21.166962760396235,-3.6 38.33392552079247,-4.0 A4.0,4.0 0 0 1 38.33392552079247,4.0 Q21.166962760396235,3.6 0,0 Z" fill="#e312c6"/>
<path transform="translate(589.5,469.9) rotate(144.3)" d="M0,0 Q17.26719089052991,-3.6 30.53438178105982,-4.0 A4.0,4.0 0 0 1 30.53438178105982,4.0 Q17.26719089052991,3.6 0,0 Z" fill="#e312c6"/>
<path transform="translate(601.4,469.9) rotate(27.3)" d="M0,0 Q21.95444858109626,-3.6 39.90889716219252,-4.0 A4.0,4.0 0 0 1 39.90889716219252,4.0 Q21.95444858109626,3.6 0,0 Z" fill="#e312c6"/>
<path transform="translate(593.8,472.4) rotate(96.4)" d="M0,0 Q17.276184655472967,-3.6 30.552369310945934,-4.0 A4.0,4.0 0 0 1 30.552369310945934,4.0 Q17.276184655472967,3.6 0,0 Z" fill="#e312c6"/>
<path transform="translate(596.0,451.6) rotate(-91.1)" d="M0,0 Q12.802441173463766,-2.9250000000000003 22.354882346927532,-3.25 A3.25,3.25 0 0 1 22.354882346927532,3.25 Q12.802441173463766,2.9250000000000003 0,0 Z" fill="#e5b412"/>
<path transform="translate(584.5,437.0) rotate(-118.2)" d="M0,0 Q7.941190087134295,-2.9250000000000003 12.63238017426859,-3.25 A3.25,3.25 0 0 1 12.63238017426859,3.25 Q7.941190087134295,2.9250000000000003 0,0 Z" fill="#e5b412"/>
<path transform="translate(571.0,436.0) rotate(-137.2)" d="M0,0 Q5.448853090330103,-2.9250000000000003 7.647706180660206,-3.25 A3.25,3.25 0 0 1 7.647706180660206,3.25 Q5.448853090330103,2.9250000000000003 0,0 Z" fill="#e5b412"/>
<path transform="translate(608.0,428.6) rotate(-52.9)" d="M0,0 Q4.140048308896899,-2.9250000000000003 5.030096617793799,-3.25 A3.25,3.25 0 0 1 5.030096617793799,3.25 Q4.140048308896899,2.9250000000000003 0,0 Z" fill="#e5b412"/>
<path transform="translate(628.5,440.6) rotate(-25.2)" d="M0,0 Q6.575902979819572,-2.9250000000000003 9.901805959639145,-3.25 A3.25,3.25 0 0 1 9.901805959639145,3.25 Q6.575902979819572,2.9250000000000003 0,0 Z" fill="#e5b412"/>
<path transform="translate(608.3,459.0) rotate(-19.0)" d="M0,0 Q14.120286824282308,-2.9250000000000003 24.990573648564617,-3.25 A3.25,3.25 0 0 1 24.990573648564617,3.25 Q14.120286824282308,2.9250000000000003 0,0 Z" fill="#e5b412"/>
<path transform="translate(577.0,453.4) rotate(-168.1)" d="M0,0 Q13.081666560496037,-2.9250000000000003 22.913333120992075,-3.25 A3.25,3.25 0 0 1 22.913333120992075,3.25 Q13.081666560496037,2.9250000000000003 0,0 Z" fill="#e5b412"/>
<path transform="translate(571.6,470.9) rotate(162.8)" d="M0,0 Q12.035468416310188,-2.9250000000000003 20.820936832620376,-3.25 A3.25,3.25 0 0 1 20.820936832620376,3.25 Q12.035468416310188,2.9250000000000003 0,0 Z" fill="#e5b412"/>
<path transform="translate(554.0,484.6) rotate(134.2)" d="M0,0 Q5.162363799656131,-2.9250000000000003 7.074727599312261,-3.25 A3.25,3.25 0 0 1 7.074727599312261,3.25 Q5.162363799656131,2.9250000000000003 0,0 Z" fill="#e5b412"/>
<path transform="translate(583.5,484.6) rotate(116.5)" d="M0,0 Q12.343115490021132,-2.9250000000000003 21.436230980042264,-3.25 A3.25,3.25 0 0 1 21.436230980042264,3.25 Q12.343115490021132,2.9250000000000003 0,0 Z" fill="#e5b412"/>
<path transform="translate(601.0,493.8) rotate(74.1)" d="M0,0 Q8.420213774008351,-2.9250000000000003 13.590427548016702,-3.25 A3.25,3.25 0 0 1 13.590427548016702,3.25 Q8.420213774008351,2.9250000000000003 0,0 Z" fill="#e5b412"/>
<path transform="translate(605.6,479.0) rotate(65.3)" d="M0,0 Q12.103821710517721,-2.9250000000000003 20.957643421035442,-3.25 A3.25,3.25 0 0 1 20.957643421035442,3.25 Q12.103821710517721,2.9250000000000003 0,0 Z" fill="#e5b412"/>
<path transform="translate(621.0,488.0) rotate(54.4)" d="M0,0 Q7.992027277230714,-2.9250000000000003 12.734054554461428,-3.25 A3.25,3.25 0 0 1 12.734054554461428,3.25 Q7.992027277230714,2.9250000000000003 0,0 Z" fill="#e5b412"/>
<circle cx="555" cy="421" r="2.4" fill="#e6e6e6"/>
<circle cx="635" cy="423" r="2.4" fill="#e6e6e6"/>
<circle cx="553" cy="435" r="2.4" fill="#e6e6e6"/>
<circle cx="541" cy="439" r="2.4" fill="#e6e6e6"/>
<circle cx="537" cy="455" r="2.4" fill="#e6e6e6"/>
<circle cx="545" cy="463" r="2.4" fill="#e6e6e6"/>
<circle cx="620" cy="445" r="2.4" fill="#e6e6e6"/>
<circle cx="644" cy="443" r="2.4" fill="#e6e6e6"/>
<circle cx="644" cy="457" r="2.4" fill="#e6e6e6"/>
<circle cx="652" cy="462" r="2.4" fill="#e6e6e6"/>
<circle cx="648" cy="482" r="2.4" fill="#e6e6e6"/>
<circle cx="555" cy="496" r="2.4" fill="#e6e6e6"/>
<circle cx="582" cy="511" r="2.4" fill="#e6e6e6"/>
<circle cx="590" cy="515" r="2.4" fill="#e6e6e6"/>
<circle cx="623" cy="507" r="2.4" fill="#e6e6e6"/>
<rect x="429.5" y="189.5" width="326.5" height="337" fill="none" stroke="#56c9a0" stroke-width="1.2"/>
<circle cx="429.5" cy="189.5" r="4.3" fill="#fff" stroke="#56c9a0" stroke-width="1.4"/>
<circle cx="756" cy="189.5" r="4.3" fill="#fff" stroke="#56c9a0" stroke-width="1.4"/>
<circle cx="429.5" cy="526.5" r="4.3" fill="#fff" stroke="#56c9a0" stroke-width="1.4"/>
<circle cx="756" cy="526.5" r="4.3" fill="#fff" stroke="#56c9a0" stroke-width="1.4"/>
<rect x="584.2" y="185.0" width="17" height="9" rx="4.5" fill="#fff" stroke="#56c9a0" stroke-width="1.4"/>
<rect x="584.2" y="522.0" width="17" height="9" rx="4.5" fill="#fff" stroke="#56c9a0" stroke-width="1.4"/>
<rect x="425.0" y="349.5" width="9" height="17" rx="4.5" fill="#fff" stroke="#56c9a0" stroke-width="1.4"/>
<rect x="751.5" y="349.5" width="9" height="17" rx="4.5" fill="#fff" stroke="#56c9a0" stroke-width="1.4"/>
<path d="M651 305 L651 329 L656.5 324 L660.5 333 L664.5 331 L660.5 322.5 L668 322.5 Z" fill="#111" stroke="#fff" stroke-width="1.3" stroke-linejoin="round"/>
</svg>
<!--ENDPOT-->

<!-- LABEL / POPUP / ARROW / TAB / WATERMARK -->
<div class="a" style="left:548px;top:149px;width:88px;height:26px;border-radius:4px;background:#18bc7a"></div>
<div class="t" style="left:548px;top:157px;width:88px;text-align:center;font-size:11px;font-weight:bold;color:#fff;word-spacing:1px">5.8 in x 6 in</div>
<div class="a" style="left:530px;top:534px;width:125px;height:31px;border-radius:8px;background:#fff;box-shadow:0 1px 5px rgba(0,0,0,.18)"></div>
<svg class="a" style="left:538px;top:541px" width="16" height="17" viewBox="0 0 16 17"><path d="M1 3.5 H15 M5.5 3.5 V1.5 H10.5 V3.5 M2.8 3.5 L3.8 15.5 H12.2 L13.2 3.5 M6.5 6.5 V12.5 M9.5 6.5 V12.5" fill="none" stroke="#333" stroke-width="1.2"/></svg>
<svg class="a" style="left:569px;top:541px" width="17" height="17" viewBox="0 0 17 17"><path d="M4.5 12 H1.5 V1.5 H12 V4.5" fill="none" stroke="#333" stroke-width="1.2"/><rect x="4.5" y="4.5" width="11" height="11" rx="1" fill="none" stroke="#333" stroke-width="1.2"/><path d="M10 7 V13 M7 10 H13" stroke="#333" stroke-width="1.2"/></svg>
<svg class="a" style="left:599px;top:544px" width="17" height="11" viewBox="0 0 17 11"><path d="M6 8 H12.5 Q15 8 15 5.5 Q15 3 12.5 3 H4.5 Q1.5 3 1.5 6 Q1.5 9.5 4.5 9.5 H12.5 M12 5.5 H5.5" fill="none" stroke="#333" stroke-width="1.3"/></svg>
<svg class="a" style="left:631px;top:541px" width="16" height="16" viewBox="0 0 16 16"><g fill="none" stroke="#333" stroke-width="1.1"><circle cx="2.5" cy="2.5" r="1.5"/><circle cx="8" cy="2.5" r="1.5"/><circle cx="2.5" cy="8" r="1.5"/><circle cx="8" cy="8" r="1.5"/><circle cx="13.5" cy="8" r="1.5"/><circle cx="8" cy="13.5" r="1.5"/><circle cx="13.5" cy="13.5" r="1.5"/><path d="M4 2.5 H6.5 M2.5 4 V6.5 M9.5 8 H12 M8 9.5 V12 M13.5 9.5 V12 M9.5 13.5 H12 M4 8 H6.5 M8 4 V6.5"/></g></svg>

<svg class="a" style="left:0;top:0" width="1500" height="844" viewBox="0 0 1500 844"><polygon points="346,473 406,496 393,509 476,601 462,613 378.5,522 363.5,535" fill="#176c7f"/></svg>
<div class="t" style="left:12px;top:803px;font-family:'Liberation Serif',serif;font-weight:bold;font-size:32.7px;color:#1b6a7e;-webkit-text-stroke:0.8px #1b6a7e">Craft with Sarah</div>

<div id="bottomline" class="a"></div>
</body></html>
